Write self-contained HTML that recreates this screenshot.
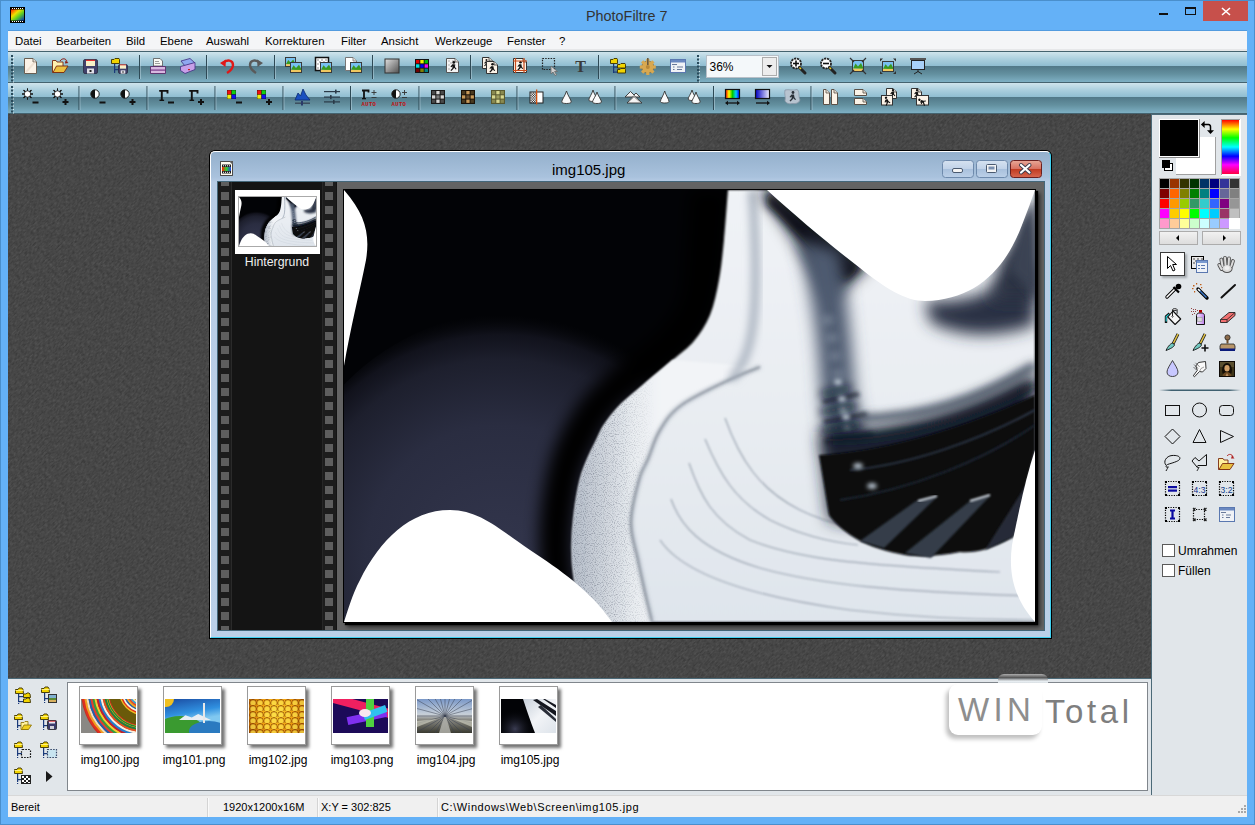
<!DOCTYPE html>
<html><head><meta charset="utf-8">
<style>
*{margin:0;padding:0;box-sizing:border-box}
html,body{width:1255px;height:825px;overflow:hidden;background:#64B1F7;font-family:"Liberation Sans",sans-serif;}
.a{position:absolute}
#frame{left:0;top:0;width:1255px;height:825px;background:#64B1F7;border:1px solid #4A8FCC;}
#title{left:586px;top:7px;font-size:14.4px;color:#333;line-height:18px}
#menubar{left:8px;top:31px;width:1239px;height:20px;background:#F4F5F7;border-bottom:2px solid #E6E7E9;box-shadow:0 -1px 0 #529BDF}
#menubar span{position:absolute;top:3px;font-size:11.4px;color:#000;line-height:14px}
.tb{left:8px;width:1239px;height:30px;background:linear-gradient(#CFE4EC 0px,#ABCFDE 7px,#8FBDD1 14px,#517888 14px,#63909F 22px,#7EB0C4 30px)}
#tbbg{left:8px;top:51px;width:1239px;height:63px;background:#45636F}
#ws{left:8px;top:114px;width:1144px;height:565px;background:#474747}
#rpanel{left:1151px;top:114px;width:96px;height:681px;background:#E1E6EA;border-left:1px solid #4C6A78;border-top:1px solid #4C6A78}
#bpanel{left:8px;top:678px;width:1144px;height:117px;background:#E1E6EA;border-top:1px solid #4C6A78;border-right:1px solid #4C6A78}
#status{left:8px;top:795px;width:1239px;height:22px;background:#F0F0F0;border-top:1px solid #D8D8D8}
#status span{position:absolute;top:4px;font-size:11px;color:#000;line-height:14px}

#win{left:210px;top:151px;width:841px;height:487px;border-radius:5px 5px 0 0;background:linear-gradient(#94B0CC,#A9C2DD 25px,#B7CCE5 30px,#BBD0E8);border-top:1px solid #fff;border-left:1px solid #fff;border-right:1px solid #3FD0F0;border-bottom:1px solid #3FD0F0;box-shadow:0 0 0 1px #000}
#wtitle{left:341px;top:9px;font-size:15px;color:#000;line-height:18px}
#client{left:6px;top:29px;width:828px;height:450px;background:#636363;border-top:1px solid #44677A;border-left:1px solid #44677A;border-right:1px solid #44677A;border-bottom:1px solid #44677A}
#film{left:0;top:0;width:119px;height:448px;background:#141414;overflow:hidden}
.fl{top:0;width:15px;height:448px;background:#1C1C1C}
.hole{position:absolute;width:8px;height:8px;background:#5E5E5E}
#pic{left:125px;top:7px;width:693px;height:434px;background:#000;border:1px solid #000;box-shadow:2px 2px 1px #000,4px 4px 4px rgba(0,0,0,.6)}
.ti{position:absolute;left:1px;top:12px;width:55px;height:34px;overflow:hidden}
</style></head><body>
<div id="frame" class="a"></div>
<div id="title" class="a">PhotoFiltre 7</div>
<div id="menubar" class="a">
<span style="left:7px">Datei</span>
<span style="left:48px">Bearbeiten</span>
<span style="left:118px">Bild</span>
<span style="left:152px">Ebene</span>
<span style="left:198px">Auswahl</span>
<span style="left:257px">Korrekturen</span>
<span style="left:333px">Filter</span>
<span style="left:373px">Ansicht</span>
<span style="left:427px">Werkzeuge</span>
<span style="left:499px">Fenster</span>
<span style="left:551px">?</span>
</div>
<div id="tbbg" class="a"></div>
<div class="a tb" style="top:52px"></div>
<div class="a tb" style="top:83px"></div>
<div id="ws" class="a"><svg width="1144" height="565" style="position:absolute;left:0;top:0"><defs><filter id="tex" x="0" y="0" width="100%" height="100%" color-interpolation-filters="sRGB"><feTurbulence type="fractalNoise" baseFrequency="0.65 0.32" numOctaves="2" seed="3" result="n"/><feColorMatrix in="n" type="matrix" values="1 0 0 0 -0.22  1 0 0 0 -0.22  1 0 0 0 -0.22  0 0 0 0 1"/></filter></defs><rect width="1144" height="565" fill="#474747"/><g transform="rotate(45 572 282)"><rect x="-400" y="-600" width="1944" height="1765" filter="url(#tex)" opacity="0.16"/></g></svg></div>
<div id="win" class="a">
<div id="wtitle" class="a">img105.jpg</div>
<div id="client" class="a">
<div id="film" class="a">
<div class="a fl" style="left:0;width:13px"><div class="hole" style="left:3px;top:-4px"></div><div class="hole" style="left:3px;top:10px"></div><div class="hole" style="left:3px;top:24px"></div><div class="hole" style="left:3px;top:38px"></div><div class="hole" style="left:3px;top:52px"></div><div class="hole" style="left:3px;top:66px"></div><div class="hole" style="left:3px;top:80px"></div><div class="hole" style="left:3px;top:94px"></div><div class="hole" style="left:3px;top:108px"></div><div class="hole" style="left:3px;top:122px"></div><div class="hole" style="left:3px;top:136px"></div><div class="hole" style="left:3px;top:150px"></div><div class="hole" style="left:3px;top:164px"></div><div class="hole" style="left:3px;top:178px"></div><div class="hole" style="left:3px;top:192px"></div><div class="hole" style="left:3px;top:206px"></div><div class="hole" style="left:3px;top:220px"></div><div class="hole" style="left:3px;top:234px"></div><div class="hole" style="left:3px;top:248px"></div><div class="hole" style="left:3px;top:262px"></div><div class="hole" style="left:3px;top:276px"></div><div class="hole" style="left:3px;top:290px"></div><div class="hole" style="left:3px;top:304px"></div><div class="hole" style="left:3px;top:318px"></div><div class="hole" style="left:3px;top:332px"></div><div class="hole" style="left:3px;top:346px"></div><div class="hole" style="left:3px;top:360px"></div><div class="hole" style="left:3px;top:374px"></div><div class="hole" style="left:3px;top:388px"></div><div class="hole" style="left:3px;top:402px"></div><div class="hole" style="left:3px;top:416px"></div><div class="hole" style="left:3px;top:430px"></div><div class="hole" style="left:3px;top:444px"></div></div>
<div class="a" style="left:13px;top:0;width:1px;height:448px;background:#2A2A2A"></div>
<div class="a fl" style="left:105px;width:13px"><div class="hole" style="left:2px;top:-4px"></div><div class="hole" style="left:2px;top:10px"></div><div class="hole" style="left:2px;top:24px"></div><div class="hole" style="left:2px;top:38px"></div><div class="hole" style="left:2px;top:52px"></div><div class="hole" style="left:2px;top:66px"></div><div class="hole" style="left:2px;top:80px"></div><div class="hole" style="left:2px;top:94px"></div><div class="hole" style="left:2px;top:108px"></div><div class="hole" style="left:2px;top:122px"></div><div class="hole" style="left:2px;top:136px"></div><div class="hole" style="left:2px;top:150px"></div><div class="hole" style="left:2px;top:164px"></div><div class="hole" style="left:2px;top:178px"></div><div class="hole" style="left:2px;top:192px"></div><div class="hole" style="left:2px;top:206px"></div><div class="hole" style="left:2px;top:220px"></div><div class="hole" style="left:2px;top:234px"></div><div class="hole" style="left:2px;top:248px"></div><div class="hole" style="left:2px;top:262px"></div><div class="hole" style="left:2px;top:276px"></div><div class="hole" style="left:2px;top:290px"></div><div class="hole" style="left:2px;top:304px"></div><div class="hole" style="left:2px;top:318px"></div><div class="hole" style="left:2px;top:332px"></div><div class="hole" style="left:2px;top:346px"></div><div class="hole" style="left:2px;top:360px"></div><div class="hole" style="left:2px;top:374px"></div><div class="hole" style="left:2px;top:388px"></div><div class="hole" style="left:2px;top:402px"></div><div class="hole" style="left:2px;top:416px"></div><div class="hole" style="left:2px;top:430px"></div><div class="hole" style="left:2px;top:444px"></div></div>
<div class="a" style="left:104px;top:0;width:1px;height:448px;background:#262626"></div>
<div class="a" style="left:17px;top:8px;width:85px;height:64px;background:#fff"></div>
<div class="a" style="left:20px;top:14px;width:79px;height:51px;background:#222;border:1px solid #aaa;overflow:hidden"><svg width="77" height="49" viewBox="344 190 691 432" preserveAspectRatio="none" style="position:absolute;left:0;top:0"><use href="#pianoContent"/></svg></div>
<div class="a" style="left:0;top:72.5px;width:118px;text-align:center;font-size:12.3px;color:#EEE;line-height:15px">Hintergrund</div>
</div>
<div id="pic" class="a" style="overflow:hidden"><!--PIANO--><svg class="a" style="left:0;top:0" width="691" height="432" viewBox="344 190 691 432">
<defs>
<filter id="b1" x="-20%" y="-20%" width="140%" height="140%"><feGaussianBlur stdDeviation="0.8"/></filter>
<filter id="b2" x="-20%" y="-20%" width="140%" height="140%"><feGaussianBlur stdDeviation="2"/></filter>
<filter id="b4" x="-30%" y="-30%" width="160%" height="160%"><feGaussianBlur stdDeviation="4"/></filter>
<filter id="b8" x="-50%" y="-50%" width="200%" height="200%"><feGaussianBlur stdDeviation="8"/></filter>
<filter id="b14" x="-50%" y="-50%" width="200%" height="200%"><feGaussianBlur stdDeviation="14"/></filter>
<radialGradient id="navy" cx="500" cy="560" r="245" gradientUnits="userSpaceOnUse">
<stop offset="0" stop-color="#33364D"/><stop offset="0.55" stop-color="#2A2D41"/><stop offset="0.82" stop-color="#1D1F2D"/><stop offset="0.92" stop-color="#141520" stop-opacity="0.85"/><stop offset="1" stop-color="#0A0B10" stop-opacity="0"/>
</radialGradient>
<linearGradient id="keysg" x1="0" y1="190" x2="0" y2="622" gradientUnits="userSpaceOnUse">
<stop offset="0" stop-color="#F0F3F6"/><stop offset="0.5" stop-color="#E9EDF2"/><stop offset="1" stop-color="#DFE5EC"/>
</linearGradient>
<linearGradient id="bandg" x1="570" y1="0" x2="660" y2="0" gradientUnits="userSpaceOnUse">
<stop offset="0" stop-color="#B4BCC8"/><stop offset="0.35" stop-color="#CDD3DB"/><stop offset="0.7" stop-color="#E8ECF0"/><stop offset="1" stop-color="#F2F4F7"/>
</linearGradient>
<filter id="speck" x="0" y="0" width="100%" height="100%" color-interpolation-filters="sRGB"><feTurbulence type="fractalNoise" baseFrequency="0.9" numOctaves="1" seed="7"/><feColorMatrix type="matrix" values="0 0 0 0 0.25  0 0 0 0 0.28  0 0 0 0 0.35  -2.2 0 0 0 1.15"/></filter>
<linearGradient id="smg" x1="565" y1="0" x2="655" y2="0" gradientUnits="userSpaceOnUse"><stop offset="0" stop-color="#fff"/><stop offset="0.6" stop-color="#fff" stop-opacity="0.8"/><stop offset="1" stop-color="#fff" stop-opacity="0"/></linearGradient><mask id="speckmask" maskUnits="userSpaceOnUse" x="344" y="190" width="691" height="432"><rect x="344" y="190" width="691" height="432" fill="url(#smg)"/></mask>
<clipPath id="bandclip"><path d="M672.7,360.0 C667.9,364.1 652.1,377.4 643.6,384.7 C635.1,392.0 627.9,397.6 621.8,403.6 C615.7,409.7 611.0,415.4 607.0,421.0 C603.0,426.6 602.5,427.2 598.0,437.0 C593.5,446.8 584.3,462.8 580.0,480.0 C575.7,497.2 572.7,522.0 572.0,540.0 C571.3,558.0 573.0,574.3 576.0,588.0 C579.0,601.7 587.7,616.3 590.0,622.0 L652,622 C650.7,616.3 646.3,598.3 644.0,588.0 C641.7,577.7 640.2,571.0 638.0,560.0 C635.8,549.0 630.8,535.3 631.0,522.0 C631.2,508.7 636.2,490.5 639.0,480.0 C641.8,469.5 644.5,467.3 648.0,459.0 C651.5,450.7 654.4,439.0 660.0,430.0 C665.6,421.0 669.7,413.5 681.5,405.0 C693.3,396.5 717.9,385.3 731.0,379.0 C744.1,372.7 755.2,369.0 760.0,367.0 Z"/></clipPath>
</defs>
<g id="pianoContent">
<rect x="344" y="190" width="691" height="432" fill="#020306"/>
<!-- navy glow -->
<circle cx="520" cy="555" r="245" fill="url(#navy)"/>
<!-- black shadow along swoosh -->
<path d="M690.0,190.0 C689.3,200.0 687.7,231.7 686.0,250.0 C684.3,268.3 685.2,285.8 680.0,300.0 C674.8,314.2 666.3,323.3 655.0,335.0 C643.7,346.7 624.8,358.3 612.0,370.0 C599.2,381.7 588.0,390.8 578.0,405.0 C568.0,419.2 558.3,435.8 552.0,455.0 C545.7,474.2 541.7,499.2 540.0,520.0 C538.3,540.8 540.0,563.0 542.0,580.0 C544.0,597.0 550.3,615.0 552.0,622.0 L590,622 C587.7,616.3 579.0,601.7 576.0,588.0 C573.0,574.3 571.3,558.0 572.0,540.0 C572.7,522.0 575.7,497.2 580.0,480.0 C584.3,462.8 593.5,446.8 598.0,437.0 C602.5,427.2 603.0,426.6 607.0,421.0 C611.0,415.4 615.7,409.7 621.8,403.6 C627.9,397.6 635.1,392.0 643.6,384.7 C652.1,377.4 664.3,367.3 672.7,360.0 C681.1,352.7 687.8,348.5 694.0,341.0 C700.2,333.5 705.8,325.2 710.0,315.0 C714.2,304.8 716.7,292.5 719.0,280.0 C721.3,267.5 722.5,255.0 724.0,240.0 C725.5,225.0 727.3,198.3 728.0,190.0 Z" fill="#020306" filter="url(#b8)"/>
<!-- main light region (keys + swoosh) -->
<path d="M728,190 C727.3,198.3 725.5,225.0 724.0,240.0 C722.5,255.0 721.3,267.5 719.0,280.0 C716.7,292.5 714.2,304.8 710.0,315.0 C705.8,325.2 700.2,333.5 694.0,341.0 C687.8,348.5 681.1,352.7 672.7,360.0 C664.3,367.3 652.1,377.4 643.6,384.7 C635.1,392.0 627.9,397.6 621.8,403.6 C615.7,409.7 611.0,415.4 607.0,421.0 C603.0,426.6 602.5,427.2 598.0,437.0 C593.5,446.8 584.3,462.8 580.0,480.0 C575.7,497.2 572.7,522.0 572.0,540.0 C571.3,558.0 573.0,574.3 576.0,588.0 C579.0,601.7 587.7,616.3 590.0,622.0 L1035,622 L1035,190 Z" fill="url(#keysg)" filter="url(#b1)"/>
<!-- textured swoosh band lower part -->
<path d="M672.7,360.0 C667.9,364.1 652.1,377.4 643.6,384.7 C635.1,392.0 627.9,397.6 621.8,403.6 C615.7,409.7 611.0,415.4 607.0,421.0 C603.0,426.6 602.5,427.2 598.0,437.0 C593.5,446.8 584.3,462.8 580.0,480.0 C575.7,497.2 572.7,522.0 572.0,540.0 C571.3,558.0 573.0,574.3 576.0,588.0 C579.0,601.7 587.7,616.3 590.0,622.0 L652,622 C650.7,616.3 646.3,598.3 644.0,588.0 C641.7,577.7 640.2,571.0 638.0,560.0 C635.8,549.0 630.8,535.3 631.0,522.0 C631.2,508.7 636.2,490.5 639.0,480.0 C641.8,469.5 644.5,467.3 648.0,459.0 C651.5,450.7 654.4,439.0 660.0,430.0 C665.6,421.0 669.7,413.5 681.5,405.0 C693.3,396.5 717.9,385.3 731.0,379.0 C744.1,372.7 755.2,369.0 760.0,367.0 Z" fill="url(#bandg)" filter="url(#b1)"/>
<g clip-path="url(#bandclip)" mask="url(#speckmask)" opacity="0.6"><rect x="560" y="350" width="230" height="272" filter="url(#speck)"/></g>
<path d="M760.0,367.0 C755.2,369.0 744.1,372.7 731.0,379.0 C717.9,385.3 693.3,396.5 681.5,405.0 C669.7,413.5 665.6,421.0 660.0,430.0 C654.4,439.0 651.5,450.7 648.0,459.0 C644.5,467.3 641.8,469.5 639.0,480.0 C636.2,490.5 631.2,508.7 631.0,522.0 C630.8,535.3 635.8,549.0 638.0,560.0 C640.2,571.0 641.7,577.7 644.0,588.0 C646.3,598.3 650.7,616.3 652.0,622.0" fill="none" stroke="#8A94A2" stroke-width="2.5" filter="url(#b2)"/>
<path d="M760.0,367.0 C755.2,369.0 744.1,372.7 731.0,379.0 C717.9,385.3 693.3,396.5 681.5,405.0 C669.7,413.5 665.6,421.0 660.0,430.0 C654.4,439.0 651.5,450.7 648.0,459.0 C644.5,467.3 641.8,469.5 639.0,480.0 C636.2,490.5 631.2,508.7 631.0,522.0 C630.8,535.3 635.8,549.0 638.0,560.0 C640.2,571.0 641.7,577.7 644.0,588.0 C646.3,598.3 650.7,616.3 652.0,622.0" fill="none" stroke="#4A5260" stroke-width="1" filter="url(#b1)" opacity="0.7"/>
<!-- white key arcs -->
<g fill="none" stroke="#8E98A6" stroke-width="1.2" opacity="0.85" filter="url(#b1)">
<path d="M725,418 C740,460 760,490 800,510 C830,525 870,532 900,534"/>
<path d="M705,439 C720,475 735,500 770,520 C800,535 830,542 858,545"/>
<path d="M689,463 C700,495 712,520 750,540 C800,560 860,565 1000,572"/>
<path d="M671,499 C680,525 700,550 760,568 C820,585 900,592 1035,596"/>
<path d="M660,540 C680,570 740,595 850,610 C920,618 980,620 1035,620"/>
</g>
<!-- top swoosh inner gray line -->
<path d="M752,190 C756,240 757,300 752,330 C749,350 742,368 731,379" fill="none" stroke="#A0AAB8" stroke-width="7" filter="url(#b4)"/>
<!-- dark navy along top-right cutout boundary -->
<path d="M760,190 L800,190 C830,215 850,245 870,262 C850,285 835,290 830,300 C815,270 795,235 760,190 Z" fill="#0C1220" filter="url(#b8)"/>
<path d="M767,190 C800,220 830,245 860,268 L845,282 C815,255 790,225 767,205 Z" fill="#080C18" filter="url(#b4)"/>
<!-- blurred gray vertical band (blurred black keys) -->
<path d="M798,240 C812,290 818,340 820,380 C822,420 826,445 836,465 L880,465 C866,440 856,410 854,380 C851,335 846,290 840,250 Z" fill="#4E5A70" filter="url(#b8)"/>
<g fill="#A8B4C2" filter="url(#b4)" opacity="0.8">
<ellipse cx="828" cy="320" rx="5" ry="3"/><ellipse cx="832" cy="338" rx="5" ry="3"/><ellipse cx="835" cy="356" rx="5" ry="3"/><ellipse cx="838" cy="374" rx="5" ry="3"/><ellipse cx="840" cy="392" rx="5" ry="3"/><ellipse cx="844" cy="410" rx="5" ry="3"/>
</g>
<g fill="#1A2232" filter="url(#b2)" opacity="0.85">
<path d="M822,400 L858,392 L860,396 L824,404Z"/><path d="M823,420 L866,412 L868,416 L825,424Z"/><path d="M824,440 L872,432 L874,436 L826,444Z"/>
</g>
<g fill="#C8D2DE" filter="url(#b2)" opacity="0.9">
<ellipse cx="843" cy="410" rx="4" ry="3"/><ellipse cx="847" cy="428" rx="4" ry="3"/><ellipse cx="850" cy="446" rx="4" ry="3"/>
</g>
<!-- dark band near top right cutout -->
<path d="M925,300 C965,305 1005,290 1035,258 L1035,325 C1000,338 960,338 930,322 Z" fill="#2A3344" filter="url(#b8)"/><path d="M1000,260 C1020,240 1030,215 1035,195 L1035,300 L990,300 Z" fill="#2A3343" filter="url(#b8)"/>
<path d="M1020,225 C1028,210 1035,200 1035,190 L1035,300 C1030,290 1020,280 1010,270 Z" fill="#3A4252" filter="url(#b4)"/>
<!-- keys dark zone blurred -->
<path d="M819,432 C880,432 960,415 1035,370 L1035,470 C980,515 900,535 829,520 Z" fill="#1A2232" filter="url(#b8)"/>
<g fill="none" filter="url(#b4)">
<path d="M860,418 C920,418 980,400 1035,365" stroke="#3A4658" stroke-width="7"/>
<path d="M830,440 C900,440 970,420 1035,385" stroke="#0E1420" stroke-width="6"/>
</g>
<!-- sharp black keys region -->
<path d="M819,455 C880,452 960,430 1035,395 L1035,450 L1013,537 C990,550 975,553 960,552 C940,556 915,558 900,554 C880,550 865,545 850,535 C840,528 832,520 829,515 Z" fill="#07080D" filter="url(#b1)"/>
<path d="M850,470 C910,465 980,440 1035,410" fill="none" stroke="#2A3444" stroke-width="2" filter="url(#b1)"/>
<path d="M840,500 C910,490 985,460 1035,425" fill="none" stroke="#1E2634" stroke-width="2" filter="url(#b1)"/>
<!-- blurred key tips on left -->
<g fill="#0E1420" filter="url(#b4)" opacity="0.9">
<path d="M820,392 L850,386 L852,390 L822,397Z"/><path d="M820,410 L855,403 L857,408 L822,415Z"/><path d="M821,428 L860,421 L862,426 L823,433Z"/>
</g>
<g fill="#B8C4D0" filter="url(#b2)">
<ellipse cx="838" cy="382" rx="4" ry="3"/><ellipse cx="842" cy="399" rx="4" ry="3"/><ellipse cx="846" cy="417" rx="4" ry="3"/><ellipse cx="858" cy="466" rx="5" ry="3"/><ellipse cx="872" cy="486" rx="5" ry="3"/>
</g>
<!-- black keys tops -->
<path d="M860,541 L916,501 L937,497 L884,548 Z" fill="#343C4A" filter="url(#b1)"/>
<path d="M905,553 L970,501 L990,496 L931,558 Z" fill="#343C4A" filter="url(#b1)"/>
<path d="M985,550 L1028,482 L1035,472 L1035,495 L1013,537 Z" fill="#262C38" filter="url(#b1)"/>
<path d="M918,501 L937,496" stroke="#D8E0EA" stroke-width="2.2" filter="url(#b1)"/>
<path d="M970,501 L990,495" stroke="#D8E0EA" stroke-width="2.2" filter="url(#b1)"/>
<!-- white cutouts -->
<g fill="#FFFFFF">
<path d="M344,190 L344,366 C350,330 360,290 366,260 C370,235 366,215 344,190 Z"/>
<path d="M344,622 L612,622 C590,590 560,570 530,550 C500,530 480,510 450,510 C410,510 380,540 360,580 C352,595 348,610 344,622 Z"/>
<path d="M767,190 C800,220 830,245 860,268 C885,288 905,301 925,301 C975,300 1005,270 1022,225 C1028,210 1032,198 1035,190 Z"/>
<path d="M1035,450 C1025,480 1018,515 1012,545 C1008,575 1015,600 1035,622 Z"/>
</g>
</g>
</svg><!--/PIANO--></div>
</div>
</div>
<div id="rpanel" class="a"></div>

<div id="bpanel" class="a"></div>
<div id="status" class="a">
<span style="left:3px">Bereit</span>
<div class="a" style="left:199px;top:2px;width:1px;height:19px;background:#D4D4D4"></div><div class="a" style="left:200px;top:2px;width:1px;height:19px;background:#FAFAFA"></div>
<div class="a" style="left:309px;top:2px;width:1px;height:19px;background:#D4D4D4"></div><div class="a" style="left:310px;top:2px;width:1px;height:19px;background:#FAFAFA"></div>
<div class="a" style="left:429px;top:2px;width:1px;height:19px;background:#D4D4D4"></div><div class="a" style="left:430px;top:2px;width:1px;height:19px;background:#FAFAFA"></div>
<svg class="a" style="left:1228px;top:9px" width="11" height="11" viewBox="0 0 11 11"><g fill="#A8A8A8"><rect x="8" y="0" width="2" height="2"/><rect x="5" y="3" width="2" height="2"/><rect x="8" y="3" width="2" height="2"/><rect x="2" y="6" width="2" height="2"/><rect x="5" y="6" width="2" height="2"/><rect x="8" y="6" width="2" height="2"/></g></svg>
<span style="left:215px">1920x1200x16M</span>
<span style="left:313px">X:Y = 302:825</span>
<span style="left:433px;letter-spacing:0.6px">C:\Windows\Web\Screen\img105.jpg</span>
</div>
<!--RPANEL--><svg class="a" style="left:1152px;top:114px" width="95" height="681" viewBox="1152 114 95 681" shape-rendering="geometricPrecision">
<defs>
<linearGradient id="rainbow" x1="0" y1="0" x2="0" y2="1">
<stop offset="0" stop-color="#FF0000"/><stop offset="0.17" stop-color="#FFFF00"/><stop offset="0.33" stop-color="#00FF00"/><stop offset="0.5" stop-color="#00FFFF"/><stop offset="0.67" stop-color="#0000FF"/><stop offset="0.83" stop-color="#FF00FF"/><stop offset="1" stop-color="#FF0040"/>
</linearGradient>
<linearGradient id="navbtn" x1="0" y1="0" x2="0" y2="1"><stop offset="0" stop-color="#F2F2F2"/><stop offset="1" stop-color="#DCDCDC"/></linearGradient>
<linearGradient id="sep" x1="0" y1="0" x2="1" y2="0"><stop offset="0" stop-color="#3F6070" stop-opacity="0"/><stop offset="0.15" stop-color="#3F6070"/><stop offset="0.85" stop-color="#3F6070"/><stop offset="1" stop-color="#3F6070" stop-opacity="0"/></linearGradient>
<filter id="sh1" x="-20%" y="-20%" width="140%" height="140%"><feGaussianBlur stdDeviation="0.8"/></filter><pattern id="dots" width="2" height="2" patternUnits="userSpaceOnUse"><rect width="1" height="1" fill="#000"/></pattern>
</defs>
<!-- colors: bg swatch -->
<rect x="1176" y="137" width="40" height="38" fill="#A0A0A0"/>
<rect x="1176" y="137" width="39" height="37" fill="#FFFFFF"/>
<!-- fg swatch -->
<rect x="1159" y="119" width="41" height="39" fill="#8A8A8A"/>
<rect x="1159" y="119" width="40" height="38" fill="#FFFFFF"/>
<rect x="1160" y="120" width="38" height="36" fill="#000000"/>
<!-- swap arrows -->
<path d="M1204,124.4 L1208.5,124.4 Q1210.5,124.6 1210.5,126.8 L1210.5,131" fill="none" stroke="#000" stroke-width="1.5"/>
<path d="M1200.9,124.4 L1204.6,120.9 L1204.6,127.9 Z" fill="#000"/>
<path d="M1207,130.2 L1214,130.2 L1210.5,133.9 Z" fill="#000"/>
<!-- reset icon -->
<rect x="1164.5" y="163.5" width="8" height="7" fill="#fff" stroke="#000" stroke-width="1"/>
<rect x="1162" y="160" width="8" height="8" fill="#000"/>
<!-- rainbow -->
<rect x="1221" y="119" width="20" height="57" fill="#FFFFFF"/>
<rect x="1221" y="119" width="1" height="56" fill="#A0A0A0"/>
<rect x="1221" y="119" width="19" height="1" fill="#A0A0A0"/>
<rect x="1222" y="120" width="17" height="54" fill="url(#rainbow)"/>
<!-- palette -->
<rect x="1159" y="178" width="81" height="51" fill="#A6A6A6"/>
<g>
<rect x="1160" y="179" width="9" height="9" fill="#000000"/>
<rect x="1170" y="179" width="9" height="9" fill="#993300"/>
<rect x="1180" y="179" width="9" height="9" fill="#333300"/>
<rect x="1190" y="179" width="9" height="9" fill="#003300"/>
<rect x="1200" y="179" width="9" height="9" fill="#003366"/>
<rect x="1210" y="179" width="9" height="9" fill="#000080"/>
<rect x="1220" y="179" width="9" height="9" fill="#333399"/>
<rect x="1230" y="179" width="9" height="9" fill="#333333"/>
<rect x="1160" y="189" width="9" height="9" fill="#800000"/>
<rect x="1170" y="189" width="9" height="9" fill="#FF6600"/>
<rect x="1180" y="189" width="9" height="9" fill="#808000"/>
<rect x="1190" y="189" width="9" height="9" fill="#008000"/>
<rect x="1200" y="189" width="9" height="9" fill="#008080"/>
<rect x="1210" y="189" width="9" height="9" fill="#0000FF"/>
<rect x="1220" y="189" width="9" height="9" fill="#666699"/>
<rect x="1230" y="189" width="9" height="9" fill="#808080"/>
<rect x="1160" y="199" width="9" height="9" fill="#FF0000"/>
<rect x="1170" y="199" width="9" height="9" fill="#FF9900"/>
<rect x="1180" y="199" width="9" height="9" fill="#99CC00"/>
<rect x="1190" y="199" width="9" height="9" fill="#339966"/>
<rect x="1200" y="199" width="9" height="9" fill="#33CCCC"/>
<rect x="1210" y="199" width="9" height="9" fill="#3366FF"/>
<rect x="1220" y="199" width="9" height="9" fill="#800080"/>
<rect x="1230" y="199" width="9" height="9" fill="#969696"/>
<rect x="1160" y="209" width="9" height="9" fill="#FF00FF"/>
<rect x="1170" y="209" width="9" height="9" fill="#FFCC00"/>
<rect x="1180" y="209" width="9" height="9" fill="#FFFF00"/>
<rect x="1190" y="209" width="9" height="9" fill="#00FF00"/>
<rect x="1200" y="209" width="9" height="9" fill="#00FFFF"/>
<rect x="1210" y="209" width="9" height="9" fill="#00CCFF"/>
<rect x="1220" y="209" width="9" height="9" fill="#993366"/>
<rect x="1230" y="209" width="9" height="9" fill="#C0C0C0"/>
<rect x="1160" y="219" width="9" height="9" fill="#FF99CC"/>
<rect x="1170" y="219" width="9" height="9" fill="#FFCC99"/>
<rect x="1180" y="219" width="9" height="9" fill="#FFFF99"/>
<rect x="1190" y="219" width="9" height="9" fill="#CCFFCC"/>
<rect x="1200" y="219" width="9" height="9" fill="#CCFFFF"/>
<rect x="1210" y="219" width="9" height="9" fill="#99CCFF"/>
<rect x="1220" y="219" width="9" height="9" fill="#CC99FF"/>
<rect x="1229" y="218" width="11" height="11" fill="#FFFFFF"/>
</g>
<!-- nav buttons -->
<rect x="1159.5" y="231.5" width="38" height="13" fill="url(#navbtn)" stroke="#ACACAC"/>
<rect x="1202.5" y="231.5" width="38" height="13" fill="url(#navbtn)" stroke="#ACACAC"/>
<path d="M1176,238 L1179,235 L1179,241 Z" fill="#000"/>
<path d="M1223,235 L1226,238 L1223,241 Z" fill="#000"/>
<!-- selected tool -->
<rect x="1162" y="254" width="25" height="24" fill="#5A5F65" opacity="0.45" filter="url(#sh1)"/>
<rect x="1160.5" y="252.5" width="24" height="23" fill="#FFFFFF" stroke="#3A3A3A"/>
<path d="M1167.5,256.5 L1167.5,268.5 L1170.5,265.5 L1173,271 L1175,270 L1172.7,264.5 L1176.5,264.5 Z" fill="#fff" stroke="#000" stroke-width="1" stroke-linejoin="round"/>
<!-- layer manager -->
<rect x="1191.5" y="256.5" width="12" height="12" fill="#E8E8E8" stroke="#000"/>
<g fill="#999"><rect x="1193" y="258" width="2" height="2"/><rect x="1197" y="258" width="2" height="2"/><rect x="1201" y="258" width="2" height="2"/><rect x="1195" y="260" width="2" height="2"/><rect x="1199" y="260" width="2" height="2"/><rect x="1193" y="262" width="2" height="2"/></g>
<rect x="1196.5" y="260.5" width="11" height="12" fill="#EEF2F8" stroke="#5A78B0"/>
<rect x="1197" y="261" width="10" height="2" fill="#7A9AD0"/>
<g fill="#5A78B0"><rect x="1198" y="265" width="2" height="1"/><rect x="1201" y="265" width="4" height="1"/><rect x="1198" y="268" width="2" height="1"/><rect x="1201" y="268" width="4" height="1"/></g>
<!-- hand -->
<g stroke-linecap="round"><path d="M1222.5,266 L1221.3,259.5" stroke="#505050" stroke-width="3.8"/><path d="M1225.5,265 L1225,257.8" stroke="#505050" stroke-width="3.8"/><path d="M1228.6,265 L1229,258.3" stroke="#505050" stroke-width="3.8"/><path d="M1231.4,266 L1233,261" stroke="#505050" stroke-width="3.8"/><path d="M1221.5,269 L1219.3,265" stroke="#505050" stroke-width="3.8"/><ellipse cx="1227" cy="268.5" rx="5.6" ry="4.6" fill="#505050"/><path d="M1222.5,266 L1221.3,259.5" stroke="#DCDCDC" stroke-width="2"/><path d="M1225.5,265 L1225,257.8" stroke="#DCDCDC" stroke-width="2"/><path d="M1228.6,265 L1229,258.3" stroke="#DCDCDC" stroke-width="2"/><path d="M1231.4,266 L1233,261" stroke="#DCDCDC" stroke-width="2"/><path d="M1221.5,269 L1219.3,265" stroke="#DCDCDC" stroke-width="2"/><ellipse cx="1227" cy="268.5" rx="4.6" ry="3.6" fill="#DCDCDC"/><ellipse cx="1227" cy="268" rx="2.5" ry="2" fill="#F0F0F0"/></g>
<!-- eyedropper -->
<path d="M1167,297 L1175,289" stroke="#000" stroke-width="3.4" stroke-linecap="round"/>
<path d="M1167,297 L1175,289" stroke="#fff" stroke-width="1.6" stroke-linecap="round"/>
<path d="M1173.5,287 L1179,292.5" stroke="#000" stroke-width="2.2"/>
<circle cx="1178.5" cy="286.5" r="2.8" fill="#000"/>
<!-- magic wand -->
<path d="M1198,289 L1207,298" stroke="#000" stroke-width="3.4" stroke-linecap="round"/>
<path d="M1199,290 L1206.5,297.5" stroke="#3C78C8" stroke-width="1.4"/>
<path d="M1198,289 L1200,291" stroke="#fff" stroke-width="1.6"/>
<g fill="#C0601A"><rect x="1193" y="285" width="1.5" height="1.5"/><rect x="1196" y="283" width="1.2" height="1.5"/><rect x="1200" y="284" width="1.5" height="1.2"/><rect x="1192" y="288" width="1.5" height="1.2"/><rect x="1194" y="291" width="1.2" height="1.5"/><rect x="1201" y="287" width="1.2" height="1.2"/></g>
<!-- line -->
<path d="M1221.5,297.5 L1235,285" stroke="#111" stroke-width="2" stroke-linecap="round"/>
<!-- bucket -->
<path d="M1166,323 L1166,316.5 L1169.5,313.5" fill="none" stroke="#111" stroke-width="2.4" stroke-linejoin="round"/>
<path d="M1166.2,321.5 L1166.2,316.8 L1169,314.3" fill="none" stroke="#20D8E0" stroke-width="1.1"/>
<path d="M1173,311 L1180.7,319 L1175.1,324.5 L1167.8,317 Z" fill="#F6F6F6" stroke="#111" stroke-width="1.1" stroke-linejoin="round"/>
<ellipse cx="1174.8" cy="309.6" rx="2.3" ry="0.9" fill="#fff" stroke="#111" stroke-width="0.9"/>
<path d="M1172.5,310 L1172.5,316.3 M1177.1,310 L1177.1,313.8" stroke="#111" stroke-width="0.9"/>
<path d="M1172.5,315.5 L1173.3,316.5 L1172.5,317.5 L1171.7,316.5 Z" fill="none" stroke="#111" stroke-width="0.6"/>
<!-- spray -->
<defs><linearGradient id="spg" x1="0" y1="0" x2="1" y2="0"><stop offset="0" stop-color="#F0E4FF"/><stop offset="0.6" stop-color="#D8B0F8"/><stop offset="1" stop-color="#B878E8"/></linearGradient></defs>
<path d="M1196.5,324.5 L1196.5,315.5 C1196.5,314 1198,313 1199,313 L1202,313 C1203,313 1204.5,314 1204.5,315.5 L1204.5,324.5 Z" fill="url(#spg)" stroke="#111" stroke-width="1"/>
<rect x="1197.5" y="317.2" width="4.6" height="4.3" fill="#D8D8D8" stroke="#8A8A8A" stroke-width="0.5"/>
<rect x="1199" y="310" width="3" height="2.6" fill="#B00000"/>
<g fill="#7A1010"><circle cx="1191.5" cy="308.5" r="0.5"/><circle cx="1193.5" cy="309.5" r="0.5"/><circle cx="1195.5" cy="309.5" r="0.5"/><circle cx="1197.5" cy="310.5" r="0.5"/><circle cx="1191.5" cy="311.5" r="0.5"/><circle cx="1193.5" cy="311.5" r="0.5"/><circle cx="1195.5" cy="311.5" r="0.5"/><circle cx="1194.5" cy="313.5" r="0.5"/><circle cx="1192.5" cy="314.5" r="0.5"/></g>
<!-- eraser -->
<path d="M1220.5,319.5 L1229,312.5 L1235,312.5 L1235,315.5 L1227,322.5 L1220.5,322.5 Z" fill="#F07070" stroke="#222" stroke-width="0.9"/>
<path d="M1220.5,319.5 L1227,319.5 L1235,312.5 M1227,319.5 L1227,322.5" fill="none" stroke="#222" stroke-width="0.8"/>
<!-- brush -->
<path d="M1178,334 L1173,344" stroke="#222" stroke-width="3"/>
<path d="M1178,334 L1173,344" stroke="#E0C040" stroke-width="1.6"/>
<path d="M1173,343 C1171,343 1168,346 1166,350.5 C1170,349 1174,347 1174.5,345 Z" fill="#70C8C0" stroke="#111" stroke-width="0.9"/>
<path d="M1205,334 L1200,344" stroke="#222" stroke-width="3"/>
<path d="M1205,334 L1200,344" stroke="#E0C040" stroke-width="1.6"/>
<path d="M1200,343 C1198,343 1195,346 1193,350.5 C1197,349 1201,347 1201.5,345 Z" fill="#70C8C0" stroke="#111" stroke-width="0.9"/>
<path d="M1205,344.5 L1205,351.5 M1201.5,348 L1208.5,348" stroke="#111" stroke-width="1.6"/>
<!-- stamp -->
<circle cx="1227.5" cy="337.5" r="2.6" fill="#8A6A4A" stroke="#222" stroke-width="0.8"/>
<rect x="1226.5" y="339.5" width="2" height="4" fill="#6A4A2A"/>
<path d="M1221,344 L1234,344 L1235,346 L1235,349.5 L1220,349.5 L1220,346 Z" fill="#B8966A" stroke="#222" stroke-width="0.8"/>
<rect x="1220" y="348.5" width="15" height="2.5" fill="#0A1A7A"/>
<!-- drop -->
<path d="M1172.5,360.5 C1170,365 1167,369 1167,372 C1167,375 1169.5,376.5 1172.5,376.5 C1175.5,376.5 1178,375 1178,372 C1178,369 1175,365 1172.5,360.5 Z" fill="#C8C8FF" stroke="#333" stroke-width="0.9"/>
<!-- smudge finger -->
<path d="M1198.5,362.5 L1205.5,361.5 L1206,368.5 L1202.5,372 L1199.5,371.5 L1194.5,376.8 L1193.3,375.8 L1197.3,370.3 L1195.8,366 Z" fill="#FAFAFA" stroke="#222" stroke-width="0.9" stroke-linejoin="round"/>
<path d="M1194,364.5 L1198,368.5 M1195.5,362.8 L1199.5,366.8 M1193.5,367 L1196.5,370" stroke="#444" stroke-width="0.7"/>
<path d="M1199.5,371.5 L1201,368.5 L1204,367" fill="none" stroke="#666" stroke-width="0.6"/>
<!-- mona -->
<rect x="1219" y="361" width="16" height="16" fill="#0E0A06"/>
<rect x="1220" y="362" width="14" height="14" fill="#3E3418"/>
<rect x="1220" y="362" width="14" height="5" fill="#5A5030"/>
<ellipse cx="1227" cy="370" rx="5" ry="7" fill="#140E06"/>
<ellipse cx="1227" cy="368.2" rx="2.6" ry="3.3" fill="#D0A068"/>
<path d="M1222.5,376 C1223,373 1225,372 1227,372 C1229,372 1231,373 1231.5,376 Z" fill="#6A4820"/>
<path d="M1225.5,376 L1227,373 L1228.5,376 Z" fill="#C09060"/>
<!-- separator -->
<rect x="1159" y="389.5" width="82" height="1.5" fill="url(#sep)"/>
<!-- shapes -->
<g fill="none" stroke="#111" stroke-width="1">
<rect x="1165.5" y="405.5" width="14" height="10"/>
<circle cx="1199.5" cy="410" r="7"/>
<rect x="1219.5" y="405.5" width="14" height="10" rx="3"/>
<path d="M1172.5,429 L1180,436.5 L1172.5,444 L1165,436.5 Z"/>
<path d="M1199.5,429.5 L1206,442.5 L1193,442.5 Z"/>
<path d="M1220.5,430.5 L1233.5,436.5 L1220.5,442.5 Z"/>
<path d="M1166,465 C1163,462 1166,456 1172,455.5 C1178,455 1181,457 1179.5,459.5 C1178,461.5 1172,463 1167.5,464.5"/>
<path d="M1167.5,464.5 C1165,466 1166,468 1168,467 C1169,466 1167,469 1166,471"/>
<path d="M1197,467 L1192,461 L1195,457.5 L1199,461 L1206.5,454.5 L1206.5,465.5 L1198,465.5"/>
<path d="M1198,465.5 C1196,467 1197,468 1199,467.5 C1199.5,467 1198,469 1197,471"/>
</g>
<!-- open folder -->
<path d="M1218.5,458.5 L1223,458.5 L1224,460 L1228,460 L1228,469.5 L1218.5,469.5 Z" fill="#FFF0A0" stroke="#7A2A10" stroke-width="0.9"/>
<path d="M1219,469.5 L1222.5,463.5 L1234,463.5 L1230,469.5 Z" fill="#E8C040" stroke="#7A2A10" stroke-width="0.9"/>
<path d="M1227,456 C1229,453.5 1232,454 1233,457" fill="none" stroke="#B02020" stroke-width="1"/>
<path d="M1232,455.5 L1234.5,458.5 L1231,458.5Z" fill="#B02020"/>
<!-- dotted boxes -->
<g fill="none" stroke="#000" stroke-width="1.2" stroke-dasharray="1.2,1.3">
<rect x="1165.5" y="481.5" width="14" height="14"/>
<rect x="1192.5" y="481.5" width="14" height="14"/>
<rect x="1219.5" y="481.5" width="14" height="14"/>
<rect x="1165.5" y="507.5" width="14" height="14"/>
<rect x="1193.5" y="509.5" width="11" height="10"/>
</g>
<g fill="#000"><rect x="1165" y="481" width="2" height="2"/><rect x="1178" y="481" width="2" height="2"/><rect x="1165" y="494" width="2" height="2"/><rect x="1178" y="494" width="2" height="2"/>
<rect x="1192" y="481" width="2" height="2"/><rect x="1205" y="481" width="2" height="2"/><rect x="1192" y="494" width="2" height="2"/><rect x="1205" y="494" width="2" height="2"/>
<rect x="1219" y="481" width="2" height="2"/><rect x="1232" y="481" width="2" height="2"/><rect x="1219" y="494" width="2" height="2"/><rect x="1232" y="494" width="2" height="2"/>
<rect x="1165" y="507" width="2" height="2"/><rect x="1178" y="507" width="2" height="2"/><rect x="1165" y="520" width="2" height="2"/><rect x="1178" y="520" width="2" height="2"/></g>
<rect x="1168" y="486" width="9" height="2.2" fill="#0A0AA0"/><rect x="1168" y="489.5" width="9" height="2.2" fill="#0A0AA0"/>
<text x="1199.5" y="492.5" font-family="Liberation Sans" font-size="8.5" fill="#10308A" text-anchor="middle">4:3</text>
<text x="1226.5" y="492.5" font-family="Liberation Sans" font-size="8.5" fill="#10408A" text-anchor="middle">3:2</text>
<path d="M1170,510.5 L1175,510.5 M1172.5,510.5 L1172.5,518.5 M1170,518.5 L1175,518.5" stroke="#0A0AA0" stroke-width="2.2"/>
<g fill="#222"><path d="M1193,508 L1195.5,510.5 M1193,510.5 L1195.5,508" stroke="#222" stroke-width="1.2"/><path d="M1204,508 L1206.5,510.5 M1204,510.5 L1206.5,508" stroke="#222" stroke-width="1.2"/><path d="M1193,518.5 L1195.5,521 M1193,521 L1195.5,518.5" stroke="#222" stroke-width="1.2"/><path d="M1204,518.5 L1206.5,521 M1204,521 L1206.5,518.5" stroke="#222" stroke-width="1.2"/></g>
<!-- window icon -->
<rect x="1219.5" y="507.5" width="15" height="14" fill="#F0F2F6" stroke="#5A78B0"/>
<rect x="1220" y="508" width="14" height="2.5" fill="#6A88C0"/>
<g fill="#6A7A9A"><rect x="1221" y="512" width="5" height="1"/><rect x="1222" y="514.5" width="1.5" height="1"/><rect x="1226" y="514.5" width="5" height="1"/><rect x="1222" y="517" width="1.5" height="1"/><rect x="1226" y="517" width="4" height="1"/></g>
<!-- checkboxes -->
<rect x="1162.5" y="544.5" width="12" height="12" fill="#fff" stroke="#5A5A5A"/>
<rect x="1162.5" y="564.5" width="12" height="12" fill="#fff" stroke="#5A5A5A"/>
<text x="1178" y="555" font-family="Liberation Sans" font-size="12" fill="#000">Umrahmen</text>
<text x="1178" y="575" font-family="Liberation Sans" font-size="12" fill="#000">Füllen</text>
</svg><!--/RPANEL-->
<!--BPANEL--><svg class="a" style="left:8px;top:679px" width="60" height="115" viewBox="8 679 60 115"><g transform="translate(15,687)"><path d="M0.5,2.5 L3,2.5 L4,1 L7,1 L8,2.5 L8.5,6.5 L0.5,6.5 Z" fill="#F2D400" stroke="#3A3000" stroke-width="0.9"/><rect x="0.5" y="3" width="8" height="1" fill="#FFF080"/><rect x="3" y="7" width="1.2" height="8" fill="#1A3A7A"/><rect x="3" y="16" width="1.2" height="1" fill="#1A3A7A"/><rect x="3" y="9" width="6" height="1.2" fill="#1A3A7A"/><rect x="3" y="14" width="6" height="1.2" fill="#1A3A7A"/><path d="M8.5,7 L11,7 L12,6 L14,6 L15,7 L15.5,10.5 L8.5,10.5 Z" fill="#F2D400" stroke="#3A3000" stroke-width="0.9"/><path d="M8.5,12 L11,12 L12,11 L14,11 L15,12 L15.5,15.5 L8.5,15.5 Z" fill="#F2D400" stroke="#3A3000" stroke-width="0.9"/></g><g transform="translate(41,686)"><path d="M0.5,2.5 L3,2.5 L4,1 L7,1 L8,2.5 L8.5,6.5 L0.5,6.5 Z" fill="#F2D400" stroke="#3A3000" stroke-width="0.9"/><rect x="0.5" y="3" width="8" height="1" fill="#FFF080"/><rect x="3" y="7" width="1.2" height="8" fill="#1A3A7A"/><rect x="3" y="16" width="1.2" height="1" fill="#1A3A7A"/><rect x="3" y="12" width="5" height="1.2" fill="#1A3A7A"/><rect x="7.5" y="8.5" width="8" height="8" fill="#5A8A30" stroke="#333" stroke-width="1"/><rect x="8" y="9" width="7" height="3" fill="#80B0D0"/><rect x="8" y="14" width="7" height="2" fill="#D8B060"/></g><g transform="translate(14,713)"><path d="M0.5,2.5 L3,2.5 L4,1 L7,1 L8,2.5 L8.5,6.5 L0.5,6.5 Z" fill="#F2D400" stroke="#3A3000" stroke-width="0.9"/><rect x="0.5" y="3" width="8" height="1" fill="#FFF080"/><rect x="3" y="7" width="1.2" height="8" fill="#1A3A7A"/><rect x="3" y="16" width="1.2" height="1" fill="#1A3A7A"/><rect x="3" y="12" width="5" height="1.2" fill="#1A3A7A"/><path d="M7,9.5 L10,9.5 L11,8.5 L14,8.5 L14,16.5 L7,16.5Z" fill="#FFF2A0" stroke="#8A7000" stroke-width="0.8"/><path d="M7.5,16.5 L10,12 L17.5,12 L14.5,16.5 Z" fill="#F0D020" stroke="#8A7000" stroke-width="0.8"/></g><g transform="translate(40,713)"><path d="M0.5,2.5 L3,2.5 L4,1 L7,1 L8,2.5 L8.5,6.5 L0.5,6.5 Z" fill="#F2D400" stroke="#3A3000" stroke-width="0.9"/><rect x="0.5" y="3" width="8" height="1" fill="#FFF080"/><rect x="3" y="7" width="1.2" height="8" fill="#1A3A7A"/><rect x="3" y="16" width="1.2" height="1" fill="#1A3A7A"/><rect x="3" y="12" width="5" height="1.2" fill="#1A3A7A"/><rect x="7.5" y="7.5" width="9" height="9" rx="1" fill="#3A3A6A" stroke="#222" stroke-width="0.8"/><rect x="9" y="8" width="6" height="2.5" fill="#E8E8F0"/><rect x="8.5" y="7.8" width="7" height="0.8" fill="#E02020"/><rect x="10" y="13" width="4" height="3" fill="#D0D0D8"/></g><g transform="translate(14,741)"><path d="M0.5,2.5 L3,2.5 L4,1 L7,1 L8,2.5 L8.5,6.5 L0.5,6.5 Z" fill="#F2D400" stroke="#3A3000" stroke-width="0.9"/><rect x="0.5" y="3" width="8" height="1" fill="#FFF080"/><rect x="3" y="7" width="1.2" height="8" fill="#1A3A7A"/><rect x="3" y="16" width="1.2" height="1" fill="#1A3A7A"/><rect x="3" y="12" width="5" height="1.2" fill="#1A3A7A"/><rect x="7.5" y="8.5" width="9" height="8" rx="1" fill="none" stroke="#111" stroke-width="1.2" stroke-dasharray="1.6,1.2"/></g><g transform="translate(40,741)"><path d="M0.5,2.5 L3,2.5 L4,1 L7,1 L8,2.5 L8.5,6.5 L0.5,6.5 Z" fill="#F2D400" stroke="#3A3000" stroke-width="0.9"/><rect x="0.5" y="3" width="8" height="1" fill="#FFF080"/><rect x="3" y="7" width="1.2" height="8" fill="#1A3A7A"/><rect x="3" y="16" width="1.2" height="1" fill="#1A3A7A"/><rect x="3" y="12" width="5" height="1.2" fill="#1A3A7A"/><rect x="7.5" y="8.5" width="9" height="8" fill="#C8E4F0" stroke="#3A4A6A" stroke-width="1.2" stroke-dasharray="1.6,1.2"/></g><g transform="translate(14,767)"><path d="M0.5,2.5 L3,2.5 L4,1 L7,1 L8,2.5 L8.5,6.5 L0.5,6.5 Z" fill="#F2D400" stroke="#3A3000" stroke-width="0.9"/><rect x="0.5" y="3" width="8" height="1" fill="#FFF080"/><rect x="3" y="7" width="1.2" height="8" fill="#1A3A7A"/><rect x="3" y="16" width="1.2" height="1" fill="#1A3A7A"/><rect x="3" y="12" width="5" height="1.2" fill="#1A3A7A"/><rect x="7" y="8" width="10" height="9" fill="#222"/><g fill="#fff"><rect x="8" y="9" width="2" height="2"/><rect x="12" y="9" width="2" height="2"/><rect x="10" y="11" width="2" height="2"/><rect x="14" y="11" width="2" height="2"/><rect x="8" y="13" width="2" height="2"/><rect x="12" y="13" width="2" height="2"/><rect x="10" y="15" width="2" height="1"/><rect x="14" y="15" width="2" height="1"/></g></g><path d="M46,771 L52.5,776.5 L46,782 Z" fill="#1A1A1A"/></svg>
<div class="a" style="left:67px;top:682px;width:1081px;height:109px;background:#fff;border:1px solid #80868C;overflow:hidden"><div class="a" style="left:11px;top:3px;width:59px;height:59px;background:#fff;border:1px solid #9A9A9A;box-shadow:3px 3px 3px rgba(0,0,0,.55)"><div class="ti"><svg width="55" height="34" viewBox="0 0 55 34" style="position:absolute;left:0;top:0"><rect width="55" height="34" fill="#8A8884"/><circle cx="62" cy="-8" r="62" fill="#C03020"/><circle cx="62" cy="-8" r="60" fill="none" stroke="#E03020" stroke-width="2.2"/><circle cx="62" cy="-8" r="58" fill="none" stroke="#F0A020" stroke-width="2.2"/><circle cx="62" cy="-8" r="56" fill="none" stroke="#F0E0C0" stroke-width="2.2"/><circle cx="62" cy="-8" r="54" fill="none" stroke="#2060B0" stroke-width="2.2"/><circle cx="62" cy="-8" r="52" fill="none" stroke="#E04030" stroke-width="2.2"/><circle cx="62" cy="-8" r="50" fill="none" stroke="#30A040" stroke-width="2.2"/><circle cx="62" cy="-8" r="48" fill="none" stroke="#F0D030" stroke-width="2.2"/><circle cx="62" cy="-8" r="46" fill="none" stroke="#C02030" stroke-width="2.2"/><circle cx="62" cy="-8" r="44" fill="none" stroke="#2080D0" stroke-width="2.2"/><circle cx="62" cy="-8" r="42" fill="none" stroke="#F8F0E0" stroke-width="2.2"/><circle cx="62" cy="-8" r="40" fill="none" stroke="#E05020" stroke-width="2.2"/><circle cx="62" cy="-8" r="38" fill="none" stroke="#208040" stroke-width="2.2"/><circle cx="62" cy="-8" r="36" fill="none" stroke="#F0C020" stroke-width="2.2"/><circle cx="62" cy="-8" r="34" fill="#6A5A0A"/><circle cx="62" cy="-8" r="36" fill="none" stroke="#208030" stroke-width="1.2"/><circle cx="62" cy="-8" r="24" fill="#F0C020"/><circle cx="62" cy="-8" r="22" fill="none" stroke="#E03020" stroke-width="1.6"/><circle cx="62" cy="-8" r="20.4" fill="none" stroke="#F0F0F0" stroke-width="1.6"/><circle cx="62" cy="-8" r="18.8" fill="none" stroke="#2060B0" stroke-width="1.6"/><circle cx="62" cy="-8" r="17.2" fill="none" stroke="#F0A020" stroke-width="1.6"/><circle cx="62" cy="-8" r="15.6" fill="none" stroke="#E04030" stroke-width="1.6"/><circle cx="62" cy="-8" r="14" fill="none" stroke="#30A0E0" stroke-width="1.6"/><circle cx="62" cy="-8" r="12.4" fill="none" stroke="#F0E0C0" stroke-width="1.6"/><circle cx="62" cy="-8" r="11" fill="#3A3028"/></svg></div></div><div class="a" style="left:4.5px;top:70px;width:75px;text-align:center;font-size:12px;line-height:14px;color:#000">img100.jpg</div><div class="a" style="left:95px;top:3px;width:59px;height:59px;background:#fff;border:1px solid #9A9A9A;box-shadow:3px 3px 3px rgba(0,0,0,.55)"><div class="ti" style="background:linear-gradient(170deg,#1A4AA0 0%,#3090E0 40%,#80C8F0 60%)"><div style="position:absolute;left:-10px;top:17px;width:50px;height:30px;border-radius:50%;background:#3A9A30"></div><div style="position:absolute;left:24px;top:22px;width:40px;height:20px;border-radius:50%;background:#2A7AC0"></div><div style="position:absolute;left:14px;top:15px;width:32px;height:6px;background:#E8EEF4;clip-path:polygon(0 100%,20% 20%,40% 60%,60% 0,80% 50%,100% 100%)"></div><div style="position:absolute;left:0;top:0;width:9px;height:8px;background:#F0C020;border-radius:0 0 8px 0"></div><div style="position:absolute;left:38px;top:4px;width:2px;height:20px;background:#E8E8E8"></div></div></div><div class="a" style="left:88.5px;top:70px;width:75px;text-align:center;font-size:12px;line-height:14px;color:#000">img101.png</div><div class="a" style="left:179px;top:3px;width:59px;height:59px;background:#fff;border:1px solid #9A9A9A;box-shadow:3px 3px 3px rgba(0,0,0,.55)"><div class="ti" style="background:radial-gradient(circle at 50% 40%,#F8D030 0,#F0A010 50%,#A05000 100%)"><div style="position:absolute;inset:0;background:radial-gradient(circle at 4px 4px,rgba(255,230,80,.7) 0 2px,rgba(120,50,0,.6) 3.5px,transparent 4px);background-size:7px 6px"></div></div></div><div class="a" style="left:172.5px;top:70px;width:75px;text-align:center;font-size:12px;line-height:14px;color:#000">img102.jpg</div><div class="a" style="left:263px;top:3px;width:59px;height:59px;background:#fff;border:1px solid #9A9A9A;box-shadow:3px 3px 3px rgba(0,0,0,.55)"><div class="ti" style="background:#1C0A58"><div style="position:absolute;left:-5px;top:3px;width:70px;height:9px;background:#F02060;transform:rotate(15deg)"></div><div style="position:absolute;left:14px;top:14px;width:40px;height:8px;background:#8030F0;transform:rotate(-12deg)"></div><div style="position:absolute;left:33px;top:0;width:8px;height:28px;background:#50D040"></div><div style="position:absolute;left:30px;top:10px;width:24px;height:7px;background:#30C0F0;transform:rotate(-20deg)"></div><div style="position:absolute;left:26px;top:10px;width:12px;height:8px;background:#F8E8F0;border-radius:50%"></div></div></div><div class="a" style="left:256.5px;top:70px;width:75px;text-align:center;font-size:12px;line-height:14px;color:#000">img103.png</div><div class="a" style="left:347px;top:3px;width:59px;height:59px;background:#fff;border:1px solid #9A9A9A;box-shadow:3px 3px 3px rgba(0,0,0,.55)"><div class="ti"><svg width="55" height="34" viewBox="0 0 55 34" style="position:absolute;left:0;top:0"><defs><linearGradient id="t104" x1="0" y1="0" x2="0" y2="1"><stop offset="0" stop-color="#7A98C8"/><stop offset="0.45" stop-color="#C8D0D8"/><stop offset="0.6" stop-color="#8A8A84"/><stop offset="1" stop-color="#3A3A30"/></linearGradient></defs><rect width="55" height="34" fill="url(#t104)"/><path d="M28,17 L88.0,17.0" stroke="#3A4050" stroke-width="0.7" opacity="0.7"/><path d="M28,17 L86.0,32.5" stroke="#3A4050" stroke-width="0.7" opacity="0.7"/><path d="M28,17 L80.0,47.0" stroke="#3A4050" stroke-width="0.7" opacity="0.7"/><path d="M28,17 L70.4,59.4" stroke="#3A4050" stroke-width="0.7" opacity="0.7"/><path d="M28,17 L58.0,69.0" stroke="#3A4050" stroke-width="0.7" opacity="0.7"/><path d="M28,17 L43.5,75.0" stroke="#3A4050" stroke-width="0.7" opacity="0.7"/><path d="M28,17 L28.0,77.0" stroke="#3A4050" stroke-width="0.7" opacity="0.7"/><path d="M28,17 L12.5,75.0" stroke="#3A4050" stroke-width="0.7" opacity="0.7"/><path d="M28,17 L-2.0,69.0" stroke="#3A4050" stroke-width="0.7" opacity="0.7"/><path d="M28,17 L-14.4,59.4" stroke="#3A4050" stroke-width="0.7" opacity="0.7"/><path d="M28,17 L-24.0,47.0" stroke="#3A4050" stroke-width="0.7" opacity="0.7"/><path d="M28,17 L-30.0,32.5" stroke="#3A4050" stroke-width="0.7" opacity="0.7"/><path d="M28,17 L-32.0,17.0" stroke="#3A4050" stroke-width="0.7" opacity="0.7"/><path d="M28,17 L-30.0,1.5" stroke="#3A4050" stroke-width="0.7" opacity="0.7"/><path d="M28,17 L-24.0,-13.0" stroke="#3A4050" stroke-width="0.7" opacity="0.7"/><path d="M28,17 L-14.4,-25.4" stroke="#3A4050" stroke-width="0.7" opacity="0.7"/><path d="M28,17 L-2.0,-35.0" stroke="#3A4050" stroke-width="0.7" opacity="0.7"/><path d="M28,17 L12.5,-41.0" stroke="#3A4050" stroke-width="0.7" opacity="0.7"/><path d="M28,17 L28.0,-43.0" stroke="#3A4050" stroke-width="0.7" opacity="0.7"/><path d="M28,17 L43.5,-41.0" stroke="#3A4050" stroke-width="0.7" opacity="0.7"/><path d="M28,17 L58.0,-35.0" stroke="#3A4050" stroke-width="0.7" opacity="0.7"/><path d="M28,17 L70.4,-25.4" stroke="#3A4050" stroke-width="0.7" opacity="0.7"/><path d="M28,17 L80.0,-13.0" stroke="#3A4050" stroke-width="0.7" opacity="0.7"/><path d="M28,17 L86.0,1.5" stroke="#3A4050" stroke-width="0.7" opacity="0.7"/><path d="M22,34 L27,18 L29,18 L34,34 Z" fill="#B8B8B0" opacity="0.8"/><path d="M0,22 L20,20 L0,28Z M55,22 L36,20 L55,28Z" fill="#D8D8C8" opacity="0.6"/></svg></div></div><div class="a" style="left:340.5px;top:70px;width:75px;text-align:center;font-size:12px;line-height:14px;color:#000">img104.jpg</div><div class="a" style="left:431px;top:3px;width:59px;height:59px;background:#fff;border:1px solid #9A9A9A;box-shadow:3px 3px 3px rgba(0,0,0,.55)"><div class="ti"><svg width="55" height="34" viewBox="0 0 55 34" style="position:absolute;left:0;top:0"><defs><linearGradient id="t105" x1="0" y1="0" x2="1" y2="1"><stop offset="0" stop-color="#C8D0DA"/><stop offset="0.5" stop-color="#F2F4F7"/><stop offset="1" stop-color="#DDE3EA"/></linearGradient><radialGradient id="t105n" cx="14" cy="30" r="20" gradientUnits="userSpaceOnUse"><stop offset="0" stop-color="#3A3C52"/><stop offset="1" stop-color="#020306" stop-opacity="0"/></radialGradient></defs><rect width="55" height="34" fill="#020306"/><rect width="55" height="34" fill="url(#t105n)"/><path d="M22,0 L55,0 L55,34 L34,34 C30,24 26,12 22,0 Z" fill="url(#t105)"/><path d="M36,0 L55,12 L55,17 L32,1 Z M44,0 L55,6 L55,9 L42,0Z" fill="#14161E"/><path d="M40,6 L55,20 L55,23 L37,8Z" fill="#2A2E38"/></svg></div></div><div class="a" style="left:424.5px;top:70px;width:75px;text-align:center;font-size:12px;line-height:14px;color:#000">img105.jpg</div><div class="a" style="left:881px;top:1px;width:93px;height:51px;background:#fff;border-radius:9px;box-shadow:-3px 4px 4px rgba(0,0,0,.25)"></div>
<div class="a" style="left:890px;top:10px;font-size:33px;line-height:33px;color:#8E8E8E;letter-spacing:4.3px">WIN</div>
<div class="a" style="left:977px;top:12px;font-size:33px;line-height:33px;color:#7E7E7E;letter-spacing:3.6px">Total</div></div><div class="a" style="left:998px;top:674px;width:50px;height:9px;border-radius:6px 6px 0 0;background:linear-gradient(#B8B8B8,#5A5A5A 40%,#E8EEF2 80%);opacity:.9"></div><!--/BPANEL-->
<!--TB1--><svg class="a" style="left:0;top:50px" width="1255" height="64" viewBox="0 50 1255 64"><rect x="11" y="55" width="2" height="2" fill="#2A4A5A"/><rect x="13" y="57" width="1" height="1" fill="#FFFFFF" opacity="0.8"/><rect x="11" y="58.5" width="2" height="2" fill="#2A4A5A"/><rect x="13" y="60.5" width="1" height="1" fill="#FFFFFF" opacity="0.8"/><rect x="11" y="62" width="2" height="2" fill="#2A4A5A"/><rect x="13" y="64" width="1" height="1" fill="#FFFFFF" opacity="0.8"/><rect x="11" y="65.5" width="2" height="2" fill="#2A4A5A"/><rect x="13" y="67.5" width="1" height="1" fill="#FFFFFF" opacity="0.8"/><rect x="11" y="69" width="2" height="2" fill="#2A4A5A"/><rect x="13" y="71" width="1" height="1" fill="#FFFFFF" opacity="0.8"/><rect x="11" y="72.5" width="2" height="2" fill="#2A4A5A"/><rect x="13" y="74.5" width="1" height="1" fill="#FFFFFF" opacity="0.8"/><rect x="11" y="76" width="2" height="2" fill="#2A4A5A"/><rect x="13" y="78" width="1" height="1" fill="#FFFFFF" opacity="0.8"/><rect x="11" y="79.5" width="2" height="2" fill="#2A4A5A"/><rect x="13" y="81.5" width="1" height="1" fill="#FFFFFF" opacity="0.8"/><rect x="11" y="86" width="2" height="2" fill="#2A4A5A"/><rect x="13" y="88" width="1" height="1" fill="#FFFFFF" opacity="0.8"/><rect x="11" y="89.5" width="2" height="2" fill="#2A4A5A"/><rect x="13" y="91.5" width="1" height="1" fill="#FFFFFF" opacity="0.8"/><rect x="11" y="93" width="2" height="2" fill="#2A4A5A"/><rect x="13" y="95" width="1" height="1" fill="#FFFFFF" opacity="0.8"/><rect x="11" y="96.5" width="2" height="2" fill="#2A4A5A"/><rect x="13" y="98.5" width="1" height="1" fill="#FFFFFF" opacity="0.8"/><rect x="11" y="100" width="2" height="2" fill="#2A4A5A"/><rect x="13" y="102" width="1" height="1" fill="#FFFFFF" opacity="0.8"/><rect x="11" y="103.5" width="2" height="2" fill="#2A4A5A"/><rect x="13" y="105.5" width="1" height="1" fill="#FFFFFF" opacity="0.8"/><rect x="11" y="107" width="2" height="2" fill="#2A4A5A"/><rect x="13" y="109" width="1" height="1" fill="#FFFFFF" opacity="0.8"/><rect x="11" y="110.5" width="2" height="2" fill="#2A4A5A"/><rect x="13" y="112.5" width="1" height="1" fill="#FFFFFF" opacity="0.8"/><path d="M24.5,58.5 L33,58.5 L36.5,62 L36.5,73.5 L24.5,73.5 Z" fill="#FBF3E8" stroke="#6A5E52" stroke-width="1"/><path d="M33,58.5 L33,62 L36.5,62" fill="#E8E0D8" stroke="#6A5E52" stroke-width="0.8"/><path d="M26,72 L35,62" stroke="#E8D8C8" stroke-width="2" opacity="0.6"/><path d="M52.5,60.5 L56,60.5 L57,62 L63,62 L63,72.5 L52.5,72.5 Z" fill="#FFF2B0" stroke="#7A2A10" stroke-width="0.9"/><path d="M53,72.5 L56.5,66 L68,66 L64,72.5 Z" fill="#EBC040" stroke="#7A2A10" stroke-width="0.9"/><path d="M60,61 C62,58 66,58 67,61.5" fill="none" stroke="#8A1A10" stroke-width="1"/><path d="M65.5,60.5 L68.5,63 L65,63.5Z" fill="#8A1A10"/><rect x="83.5" y="59.5" width="14" height="14" rx="1.5" fill="#40406A" stroke="#2A2A40" stroke-width="0.8"/><rect x="86" y="60" width="9" height="6" fill="#F8F0C8"/><rect x="86" y="59.8" width="9" height="1.2" fill="#E03030"/><rect x="87" y="68.5" width="7" height="5" fill="#E0E0E8"/><rect x="89.5" y="70" width="2" height="2" fill="#222"/><path d="M111.5,59.5 L114,59.5 L115,58.5 L119,58.5 L119.5,59.5 L119.5,63.5 L111.5,63.5 Z" fill="#F2D400" stroke="#3A3000" stroke-width="0.9"/><rect x="114" y="64" width="1.2" height="9" fill="#1A3A7A"/><rect x="114" y="69" width="5" height="1.2" fill="#1A3A7A"/><rect x="118.5" y="64.5" width="9" height="9" rx="1.5" fill="#40406A" stroke="#2A2A40" stroke-width="0.8"/><rect x="120" y="64.6667" width="6" height="4" fill="#F8F0C8"/><rect x="120" y="64.5333" width="6" height="0.8" fill="#E03030"/><rect x="120.667" y="70.3333" width="4.66667" height="3.33333" fill="#E0E0E8"/><rect x="122.333" y="71.3333" width="1.33333" height="1.33333" fill="#222"/><rect x="139" y="55" width="1" height="24" fill="#2E4A56"/><rect x="140" y="55" width="1" height="24" fill="#C8E0EA" opacity="0.45"/><path d="M153.5,58.5 L160,58.5 L162.5,61 L162.5,66 L153.5,66 Z" fill="#FAFAF5" stroke="#555" stroke-width="0.8"/><rect x="155" y="61" width="4" height="0.8" fill="#888"/><rect x="155" y="63" width="5" height="0.8" fill="#888"/><path d="M150.5,66.5 L165.5,66.5 L165.5,73.5 L150.5,73.5 Z" fill="#D8B8E0" stroke="#5A2A6A" stroke-width="0.9"/><rect x="151" y="69.5" width="14" height="1.2" fill="#7A3A8A"/><path d="M181,61 L190,58.5 L195,63 L185,66 Z" fill="#90A8F0" stroke="#4A3A8A" stroke-width="0.9"/><path d="M180.5,66.5 L195,62.5 L195,69.5 L185,73.5 L180.5,70.5 Z" fill="#C8A0E8" stroke="#4A3A8A" stroke-width="0.9"/><rect x="188" y="69" width="2" height="1.2" fill="#D02020"/><rect x="206" y="55" width="1" height="24" fill="#2E4A56"/><rect x="207" y="55" width="1" height="24" fill="#C8E0EA" opacity="0.45"/><path d="M223,63 C227,59 233,60 233,65 C233,69 230,71 227,73" fill="none" stroke="#E01818" stroke-width="2.4"/><path d="M220,63 L226,59.5 L225.5,67 Z" fill="#E01818"/><path d="M260,63 C256,59 250,60 250,65 C250,69 253,71 256,73" fill="none" stroke="#5A5A5A" stroke-width="2.4"/><path d="M263,63 L257,59.5 L257.5,67 Z" fill="#5A5A5A"/><rect x="274" y="55" width="1" height="24" fill="#2E4A56"/><rect x="275" y="55" width="1" height="24" fill="#C8E0EA" opacity="0.45"/><rect x="285" y="57" width="11" height="10" fill="#3A3A3A"/><rect x="286" y="58" width="9" height="8" fill="#78C0F0"/><path d="M286,64 L288.3,60 L290.5,62.5 L293.25,59.5 L295,63 L295,64.5 Z" fill="#3A9A20"/><rect x="286" y="64.2" width="9" height="1.8" fill="#F0C860"/><rect x="290" y="62" width="12" height="11" fill="#3A3A3A"/><rect x="291" y="63" width="10" height="9" fill="#78C0F0"/><path d="M291,69.7 L293.6,65.3 L296,68.05 L299,64.75 L301,68.6 L301,70.25 Z" fill="#3A9A20"/><rect x="291" y="69.92" width="10" height="2.08" fill="#F0C860"/><rect x="315.5" y="57.5" width="13" height="13" fill="#FFF" stroke="#111" stroke-width="1.5"/><g fill="#C8C8C8"><rect x="317" y="59" width="2" height="2"/><rect x="321" y="59" width="2" height="2"/><rect x="325" y="59" width="2" height="2"/><rect x="319" y="61" width="2" height="2"/><rect x="323" y="61" width="2" height="2"/><rect x="317" y="63" width="2" height="2"/><rect x="317" y="67" width="2" height="2"/></g><rect x="320" y="62" width="12" height="11" fill="#3A3A3A"/><rect x="321" y="63" width="10" height="9" fill="#78C0F0"/><path d="M321,69.7 L323.6,65.3 L326,68.05 L329,64.75 L331,68.6 L331,70.25 Z" fill="#3A9A20"/><rect x="321" y="69.92" width="10" height="2.08" fill="#F0C860"/><path d="M345.5,57.5 L353,57.5 L356.5,61 L356.5,70.5 L345.5,70.5 Z" fill="#FFFFFF" stroke="#777" stroke-width="1"/><path d="M353,57.5 L353,61 L356.5,61" fill="#E8E0D8" stroke="#777" stroke-width="0.8"/><rect x="350" y="62" width="12" height="11" fill="#3A3A3A"/><rect x="351" y="63" width="10" height="9" fill="#78C0F0"/><path d="M351,69.7 L353.6,65.3 L356,68.05 L359,64.75 L361,68.6 L361,70.25 Z" fill="#3A9A20"/><rect x="351" y="69.92" width="10" height="2.08" fill="#F0C860"/><rect x="372" y="55" width="1" height="24" fill="#2E4A56"/><rect x="373" y="55" width="1" height="24" fill="#C8E0EA" opacity="0.45"/><defs><linearGradient id="gsq" x1="0" y1="0" x2="1" y2="1"><stop offset="0" stop-color="#E0E0E0"/><stop offset="1" stop-color="#505050"/></linearGradient></defs><rect x="385" y="59" width="14" height="14" fill="url(#gsq)" stroke="#333" stroke-width="1"/><rect x="415" y="59" width="14" height="14" fill="#111"/><rect x="416" y="60" width="3.4" height="3.4" fill="#E00000"/><rect x="420.3" y="60" width="3.4" height="3.4" fill="#F0F000"/><rect x="424.6" y="60" width="3.4" height="3.4" fill="#00C000"/><rect x="416" y="64.3" width="3.4" height="3.4" fill="#00E0E0"/><rect x="420.3" y="64.3" width="3.4" height="3.4" fill="#0000F0"/><rect x="424.6" y="64.3" width="3.4" height="3.4" fill="#F000F0"/><rect x="416" y="68.6" width="3.4" height="3.4" fill="#700000"/><rect x="420.3" y="68.6" width="3.4" height="3.4" fill="#808000"/><rect x="424.6" y="68.6" width="3.4" height="3.4" fill="#008080"/><path d="M446.5,58.5 L455,58.5 L458.5,62 L458.5,72.5 L446.5,72.5 Z" fill="#F4F4F4" stroke="#555" stroke-width="1"/><path d="M455,58.5 L455,62 L458.5,62" fill="#E8E0D8" stroke="#555" stroke-width="0.8"/><g fill="#D0D0D0"><rect x="448" y="60" width="2" height="2"/><rect x="452" y="60" width="2" height="2"/><rect x="450" y="62" width="2" height="2"/><rect x="448" y="64" width="2" height="2"/><rect x="454" y="64" width="2" height="2"/><rect x="448" y="68" width="2" height="2"/></g><g transform="translate(449,61) scale(0.95)" fill="#111"><circle cx="5" cy="1.5" r="1.4"/><path d="M3.5,3.5 L6,3.5 L6.5,6.5 L8,8.5 L7,9 L5.5,7.2 L4.5,8.5 L2.5,10.5 L1.5,9.8 L3.5,7.5 L3.8,5.5 L2.5,6.5 L1.5,6 Z"/></g><rect x="470" y="55" width="1" height="24" fill="#2E4A56"/><rect x="471" y="55" width="1" height="24" fill="#C8E0EA" opacity="0.45"/><path d="M482.5,57.5 L489,57.5 L492.5,61 L492.5,68.5 L482.5,68.5 Z" fill="#FBF3E8" stroke="#333" stroke-width="1"/><path d="M489,57.5 L489,61 L492.5,61" fill="#E8E0D8" stroke="#333" stroke-width="0.8"/><g transform="translate(483,59) scale(0.7)" fill="#111"><circle cx="5" cy="1.5" r="1.4"/><path d="M3.5,3.5 L6,3.5 L6.5,6.5 L8,8.5 L7,9 L5.5,7.2 L4.5,8.5 L2.5,10.5 L1.5,9.8 L3.5,7.5 L3.8,5.5 L2.5,6.5 L1.5,6 Z"/></g><path d="M486.5,61.5 L494,61.5 L497.5,65 L497.5,73.5 L486.5,73.5 Z" fill="#FBF3E8" stroke="#333" stroke-width="1"/><path d="M494,61.5 L494,65 L497.5,65" fill="#E8E0D8" stroke="#333" stroke-width="0.8"/><g transform="translate(488,63) scale(0.9)" fill="#111"><circle cx="5" cy="1.5" r="1.4"/><path d="M3.5,3.5 L6,3.5 L6.5,6.5 L8,8.5 L7,9 L5.5,7.2 L4.5,8.5 L2.5,10.5 L1.5,9.8 L3.5,7.5 L3.8,5.5 L2.5,6.5 L1.5,6 Z"/></g><path d="M513.5,58.5 L523,58.5 L526.5,62 L526.5,72.5 L513.5,72.5 Z" fill="#FBF3E8" stroke="#333" stroke-width="1"/><path d="M523,58.5 L523,62 L526.5,62" fill="#E8E0D8" stroke="#333" stroke-width="0.8"/><g transform="translate(516,61) scale(0.9)" fill="#111"><circle cx="5" cy="1.5" r="1.4"/><path d="M3.5,3.5 L6,3.5 L6.5,6.5 L8,8.5 L7,9 L5.5,7.2 L4.5,8.5 L2.5,10.5 L1.5,9.8 L3.5,7.5 L3.8,5.5 L2.5,6.5 L1.5,6 Z"/></g><path d="M513,61 L527,61 M513,70.5 L527,70.5 M515.5,58 L515.5,73 M524,58 L524,73" stroke="#C84A1A" stroke-width="1.2"/><rect x="542.5" y="58.5" width="12" height="11" fill="none" stroke="#222" stroke-width="1.2" stroke-dasharray="1.5,1.2"/><path d="M551,66 L551,74 L553,72 L555,75.5 L556.5,74.8 L554.6,71.5 L557.5,71.5 Z" fill="#D0D0D0" stroke="#6A6A6A" stroke-width="0.8"/><text x="580.5" y="72" font-family="Liberation Serif" font-weight="bold" font-size="16" fill="#3A3A3A" text-anchor="middle">T</text><rect x="598" y="55" width="1" height="24" fill="#2E4A56"/><rect x="599" y="55" width="1" height="24" fill="#C8E0EA" opacity="0.45"/><path d="M610.5,59.5 L613,59.5 L614,58.5 L617,58.5 L617.5,59.5 L617.5,63.5 L610.5,63.5 Z" fill="#F2D400" stroke="#3A3000" stroke-width="0.9"/><rect x="613" y="64" width="1.2" height="9" fill="#1A3A7A"/><rect x="613" y="66.5" width="5" height="1.2" fill="#1A3A7A"/><rect x="613" y="71.5" width="5" height="1.2" fill="#1A3A7A"/><path d="M617.5,64.5 L620,64.5 L621,63.5 L625,63.5 L625.5,64.5 L625.5,68 L617.5,68 Z" fill="#F2D400" stroke="#3A3000" stroke-width="0.9"/><path d="M617.5,69.5 L620,69.5 L621,68.5 L625,68.5 L625.5,69.5 L625.5,73 L617.5,73 Z" fill="#F2D400" stroke="#3A3000" stroke-width="0.9"/><g transform="translate(647.8,67)"><circle r="6" fill="#D8A850" stroke="#8A6A30" stroke-width="0.8"/><rect x="-1.6" y="-8" width="3.2" height="3.5" fill="#D8A850" transform="rotate(0)"/><rect x="-1.6" y="-8" width="3.2" height="3.5" fill="#D8A850" transform="rotate(45)"/><rect x="-1.6" y="-8" width="3.2" height="3.5" fill="#D8A850" transform="rotate(90)"/><rect x="-1.6" y="-8" width="3.2" height="3.5" fill="#D8A850" transform="rotate(135)"/><rect x="-1.6" y="-8" width="3.2" height="3.5" fill="#D8A850" transform="rotate(180)"/><rect x="-1.6" y="-8" width="3.2" height="3.5" fill="#D8A850" transform="rotate(225)"/><rect x="-1.6" y="-8" width="3.2" height="3.5" fill="#D8A850" transform="rotate(270)"/><rect x="-1.6" y="-8" width="3.2" height="3.5" fill="#D8A850" transform="rotate(315)"/><circle r="2" fill="#B88838"/><rect x="-0.8" y="-9" width="1.6" height="7" fill="#6A5A40"/></g><rect x="670.5" y="59.5" width="15" height="13" fill="#F0F2F6" stroke="#5A78B0"/><rect x="671" y="60" width="14" height="2.5" fill="#6A88C0"/><g fill="#6A7A9A"><rect x="672" y="64" width="5" height="1"/><rect x="673" y="66.5" width="1.5" height="1"/><rect x="677" y="66.5" width="6" height="1"/><rect x="673" y="69" width="1.5" height="1"/><rect x="677" y="69" width="5" height="1"/></g><rect x="697" y="55" width="2" height="2" fill="#2A4A5A"/><rect x="699" y="57" width="1" height="1" fill="#FFFFFF" opacity="0.8"/><rect x="697" y="58.5" width="2" height="2" fill="#2A4A5A"/><rect x="699" y="60.5" width="1" height="1" fill="#FFFFFF" opacity="0.8"/><rect x="697" y="62" width="2" height="2" fill="#2A4A5A"/><rect x="699" y="64" width="1" height="1" fill="#FFFFFF" opacity="0.8"/><rect x="697" y="65.5" width="2" height="2" fill="#2A4A5A"/><rect x="699" y="67.5" width="1" height="1" fill="#FFFFFF" opacity="0.8"/><rect x="697" y="69" width="2" height="2" fill="#2A4A5A"/><rect x="699" y="71" width="1" height="1" fill="#FFFFFF" opacity="0.8"/><rect x="697" y="72.5" width="2" height="2" fill="#2A4A5A"/><rect x="699" y="74.5" width="1" height="1" fill="#FFFFFF" opacity="0.8"/><rect x="697" y="76" width="2" height="2" fill="#2A4A5A"/><rect x="699" y="78" width="1" height="1" fill="#FFFFFF" opacity="0.8"/><rect x="697" y="79.5" width="2" height="2" fill="#2A4A5A"/><rect x="699" y="81.5" width="1" height="1" fill="#FFFFFF" opacity="0.8"/><rect x="706.5" y="55.5" width="72" height="22" fill="#FFFFFF" stroke="#B8C0C8"/><rect x="707" y="56" width="71" height="21" fill="#F4F8FA"/><rect x="762.5" y="57.5" width="14" height="18" fill="#EDEDED" stroke="#ACACAC"/><path d="M766.5,65 L772.5,65 L769.5,68 Z" fill="#111"/><text x="709.5" y="71" font-family="Liberation Sans" font-size="12" fill="#000">36%</text><circle cx="796" cy="63.5" r="5" fill="#FFFFFF" stroke="#222" stroke-width="1.8" stroke-dasharray="2.2,0.8"/><path d="M793,63.5 L799,63.5" stroke="#111" stroke-width="1.6"/><path d="M796,60.5 L796,66.5" stroke="#111" stroke-width="1.6"/><path d="M799.5,67.5 L805,73" stroke="#222" stroke-width="3" stroke-linecap="round"/><path d="M799.5,67.5 L801,69" stroke="#F0D020" stroke-width="1.5"/><circle cx="826" cy="63.5" r="5" fill="#FFFFFF" stroke="#222" stroke-width="1.8" stroke-dasharray="2.2,0.8"/><path d="M823,63.5 L829,63.5" stroke="#111" stroke-width="1.6"/><path d="M829.5,67.5 L835,73" stroke="#222" stroke-width="3" stroke-linecap="round"/><path d="M829.5,67.5 L831,69" stroke="#F0D020" stroke-width="1.5"/><rect x="852" y="60" width="12" height="12" fill="#3A3A3A"/><rect x="853" y="61" width="10" height="10" fill="#78C0F0"/><path d="M853,68.4 L855.6,63.6 L858,66.6 L861,63 L863,67.2 L863,69 Z" fill="#3A9A20"/><rect x="853" y="68.64" width="10" height="2.36" fill="#F0C860"/><path d="M850,58 L854,62 M866,58 L862,62 M850,74 L854,70 M866,74 L862,70" stroke="#333" stroke-width="1.2"/><rect x="882" y="61" width="12" height="11" fill="#3A3A3A"/><rect x="883" y="62" width="10" height="9" fill="#78C0F0"/><path d="M883,68.7 L885.6,64.3 L888,67.05 L891,63.75 L893,67.6 L893,69.25 Z" fill="#3A9A20"/><rect x="883" y="68.92" width="10" height="2.08" fill="#F0C860"/><path d="M880,58.5 L883,58.5 L880,61.5Z M896,58.5 L893,58.5 L896,61.5Z M880,74 L883,74 L880,71Z M896,74 L893,74 L896,71Z" fill="#333"/><rect x="910" y="58" width="16" height="2" fill="#555"/><rect x="911.5" y="60.5" width="13" height="9" fill="#A8D0F8" stroke="#222" stroke-width="1"/><path d="M918,70 L918,72 M914,74 L918,71.5 L922,74" stroke="#222" stroke-width="1" fill="none"/><g transform="translate(27.5,94)"><rect x="-0.5" y="-5.5" width="1" height="11" fill="#111" transform="rotate(0)"/><rect x="-0.5" y="-5.5" width="1" height="11" fill="#111" transform="rotate(45)"/><rect x="-0.5" y="-5.5" width="1" height="11" fill="#111" transform="rotate(90)"/><rect x="-0.5" y="-5.5" width="1" height="11" fill="#111" transform="rotate(135)"/><rect x="-0.5" y="-5.5" width="1" height="11" fill="#111" transform="rotate(180)"/><rect x="-0.5" y="-5.5" width="1" height="11" fill="#111" transform="rotate(225)"/><rect x="-0.5" y="-5.5" width="1" height="11" fill="#111" transform="rotate(270)"/><rect x="-0.5" y="-5.5" width="1" height="11" fill="#111" transform="rotate(315)"/><circle r="3.2" fill="#FFF" stroke="#111" stroke-width="0.8"/></g><rect x="32.5" y="101.5" width="6" height="2" fill="#111"/><g transform="translate(57.5,94)"><rect x="-0.5" y="-5.5" width="1" height="11" fill="#111" transform="rotate(0)"/><rect x="-0.5" y="-5.5" width="1" height="11" fill="#111" transform="rotate(45)"/><rect x="-0.5" y="-5.5" width="1" height="11" fill="#111" transform="rotate(90)"/><rect x="-0.5" y="-5.5" width="1" height="11" fill="#111" transform="rotate(135)"/><rect x="-0.5" y="-5.5" width="1" height="11" fill="#111" transform="rotate(180)"/><rect x="-0.5" y="-5.5" width="1" height="11" fill="#111" transform="rotate(225)"/><rect x="-0.5" y="-5.5" width="1" height="11" fill="#111" transform="rotate(270)"/><rect x="-0.5" y="-5.5" width="1" height="11" fill="#111" transform="rotate(315)"/><circle r="3.2" fill="#FFF" stroke="#111" stroke-width="0.8"/></g><rect x="62.5" y="101" width="6" height="2" fill="#111"/><rect x="64.5" y="99" width="2" height="6" fill="#111"/><rect x="78.5" y="86" width="1" height="24" fill="#2E4A56"/><rect x="79.5" y="86" width="1" height="24" fill="#C8E0EA" opacity="0.45"/><circle cx="95" cy="94" r="4.2" fill="#FFF" stroke="#111" stroke-width="0.9"/><path d="M95,89.8 A4.2,4.2 0 0 0 95,98.2 Z" fill="#111"/><rect x="99.5" y="101.5" width="6" height="2" fill="#111"/><circle cx="125" cy="94" r="4.2" fill="#FFF" stroke="#111" stroke-width="0.9"/><path d="M125,89.8 A4.2,4.2 0 0 0 125,98.2 Z" fill="#111"/><rect x="129.5" y="101" width="6" height="2" fill="#111"/><rect x="131.5" y="99" width="2" height="6" fill="#111"/><rect x="146.5" y="86" width="1" height="24" fill="#2E4A56"/><rect x="147.5" y="86" width="1" height="24" fill="#C8E0EA" opacity="0.45"/><path d="M159.5,90.9 L167.5,90.9 L167.5,93.5 M161.8,91 L161.8,100" fill="none" stroke="#111" stroke-width="1.9"/><rect x="159.5" y="99.6" width="4.6" height="1.4" fill="#111"/><rect x="159.2" y="90.2" width="1.2" height="1.2" fill="#111"/><rect x="168" y="101.5" width="6" height="2" fill="#111"/><path d="M189.5,90.9 L197.5,90.9 L197.5,93.5 M191.8,91 L191.8,100" fill="none" stroke="#111" stroke-width="1.9"/><rect x="189.5" y="99.6" width="4.6" height="1.4" fill="#111"/><rect x="189.2" y="90.2" width="1.2" height="1.2" fill="#111"/><rect x="198" y="101" width="6" height="2" fill="#111"/><rect x="200" y="99" width="2" height="6" fill="#111"/><rect x="214.5" y="86" width="1" height="24" fill="#2E4A56"/><rect x="215.5" y="86" width="1" height="24" fill="#C8E0EA" opacity="0.45"/><rect x="227" y="90" width="9" height="9" fill="#111"/><rect x="227.3" y="90.3" width="4" height="4" fill="#F01010"/><rect x="231.7" y="90.3" width="4" height="4" fill="#10D010"/><rect x="227.3" y="94.7" width="4" height="4" fill="#F0F010"/><rect x="231.7" y="94.7" width="4" height="4" fill="#1010F0"/><rect x="236" y="101.5" width="6" height="2" fill="#111"/><rect x="257" y="90" width="9" height="9" fill="#111"/><rect x="257.3" y="90.3" width="4" height="4" fill="#F01010"/><rect x="261.7" y="90.3" width="4" height="4" fill="#10D010"/><rect x="257.3" y="94.7" width="4" height="4" fill="#F0F010"/><rect x="261.7" y="94.7" width="4" height="4" fill="#1010F0"/><rect x="266" y="101" width="6" height="2" fill="#111"/><rect x="268" y="99" width="2" height="6" fill="#111"/><rect x="282.5" y="86" width="1" height="24" fill="#2E4A56"/><rect x="283.5" y="86" width="1" height="24" fill="#C8E0EA" opacity="0.45"/><path d="M295,100 L298,93 L300.5,96 L303,89 L306,95 L310,100 Z" fill="#1A50C0" stroke="#0A2A70" stroke-width="0.8"/><rect x="295" y="102.5" width="15" height="1.4" fill="#3A4A5A"/><rect x="301" y="101" width="2" height="4.5" fill="#2A3A6A"/><rect x="324" y="91" width="16" height="1.2" fill="#2A3A48"/><rect x="335" y="89.6" width="1.6" height="4" fill="#2A3A48"/><rect x="324" y="96.5" width="16" height="1.2" fill="#2A3A48"/><rect x="330" y="95.1" width="1.6" height="4" fill="#2A3A48"/><rect x="324" y="101.3" width="16" height="1.2" fill="#2A3A48"/><rect x="333" y="99.9" width="1.6" height="4" fill="#2A3A48"/><rect x="350" y="86" width="1" height="24" fill="#2E4A56"/><rect x="351" y="86" width="1" height="24" fill="#C8E0EA" opacity="0.45"/><path d="M362,90.5 L368.5,90.5 L368.5,92.5 M364,90.5 L364,98.5" stroke="#111" stroke-width="1.8" fill="none"/><rect x="362" y="98" width="4" height="1.3" fill="#111"/><path d="M371.5,92.5 L376.5,92.5 M374,90 L374,95 M371.5,97.5 L376.5,97.5" stroke="#333" stroke-width="0.9"/><text x="361.5" y="105.5" font-family="Liberation Mono" font-weight="bold" font-size="5.5" fill="#C01010" letter-spacing="0.4">AUTO</text><circle cx="396" cy="94" r="4.2" fill="#FFF" stroke="#111" stroke-width="0.9"/><path d="M396,89.8 A4.2,4.2 0 0 0 396,98.2 Z" fill="#111"/><path d="M402,92.5 L407,92.5 M404.5,90 L404.5,95 M402,97.5 L407,97.5" stroke="#333" stroke-width="0.9"/><text x="391.5" y="105.5" font-family="Liberation Mono" font-weight="bold" font-size="5.5" fill="#C01010" letter-spacing="0.4">AUTO</text><rect x="418.5" y="86" width="1" height="24" fill="#2E4A56"/><rect x="419.5" y="86" width="1" height="24" fill="#C8E0EA" opacity="0.45"/><rect x="431" y="90" width="14" height="14" fill="#1A1A1A"/><rect x="432" y="91" width="3.3" height="3.3" fill="#4A4A4A"/><rect x="436.3" y="91" width="3.3" height="3.3" fill="#D8D8D8"/><rect x="440.6" y="91" width="3.3" height="3.3" fill="#4A4A4A"/><rect x="432" y="95.3" width="3.3" height="3.3" fill="#D8D8D8"/><rect x="436.3" y="95.3" width="3.3" height="3.3" fill="#7A7A7A"/><rect x="440.6" y="95.3" width="3.3" height="3.3" fill="#D8D8D8"/><rect x="432" y="99.6" width="3.3" height="3.3" fill="#4A4A4A"/><rect x="436.3" y="99.6" width="3.3" height="3.3" fill="#D8D8D8"/><rect x="440.6" y="99.6" width="3.3" height="3.3" fill="#4A4A4A"/><rect x="461" y="90" width="14" height="14" fill="#1A1208"/><rect x="462" y="91" width="3.3" height="3.3" fill="#4A3A20"/><rect x="466.3" y="91" width="3.3" height="3.3" fill="#C89A5A"/><rect x="470.6" y="91" width="3.3" height="3.3" fill="#4A3A20"/><rect x="462" y="95.3" width="3.3" height="3.3" fill="#C89A5A"/><rect x="466.3" y="95.3" width="3.3" height="3.3" fill="#6A5030"/><rect x="470.6" y="95.3" width="3.3" height="3.3" fill="#C89A5A"/><rect x="462" y="99.6" width="3.3" height="3.3" fill="#4A3A20"/><rect x="466.3" y="99.6" width="3.3" height="3.3" fill="#C89A5A"/><rect x="470.6" y="99.6" width="3.3" height="3.3" fill="#4A3A20"/><rect x="491" y="90" width="14" height="14" fill="#5A5A30"/><rect x="492" y="91" width="3.3" height="3.3" fill="#8A8A50"/><rect x="496.3" y="91" width="3.3" height="3.3" fill="#D8D890"/><rect x="500.6" y="91" width="3.3" height="3.3" fill="#8A8A50"/><rect x="492" y="95.3" width="3.3" height="3.3" fill="#D8D890"/><rect x="496.3" y="95.3" width="3.3" height="3.3" fill="#A0A060"/><rect x="500.6" y="95.3" width="3.3" height="3.3" fill="#D8D890"/><rect x="492" y="99.6" width="3.3" height="3.3" fill="#8A8A50"/><rect x="496.3" y="99.6" width="3.3" height="3.3" fill="#D8D890"/><rect x="500.6" y="99.6" width="3.3" height="3.3" fill="#8A8A50"/><rect x="516.5" y="86" width="1" height="24" fill="#2E4A56"/><rect x="517.5" y="86" width="1" height="24" fill="#C8E0EA" opacity="0.45"/><rect x="530" y="92" width="13" height="11" fill="#FFF" stroke="#222" stroke-width="1"/><g fill="#333"><rect x="530.5" y="92.5" width="1.2" height="1.2"/><rect x="530.5" y="94.9" width="1.2" height="1.2"/><rect x="530.5" y="97.3" width="1.2" height="1.2"/><rect x="530.5" y="99.7" width="1.2" height="1.2"/><rect x="530.5" y="102.1" width="1.2" height="1.2"/><rect x="531.7" y="93.7" width="1.2" height="1.2"/><rect x="531.7" y="96.1" width="1.2" height="1.2"/><rect x="531.7" y="98.5" width="1.2" height="1.2"/><rect x="531.7" y="100.9" width="1.2" height="1.2"/><rect x="532.9" y="92.5" width="1.2" height="1.2"/><rect x="532.9" y="94.9" width="1.2" height="1.2"/><rect x="532.9" y="97.3" width="1.2" height="1.2"/><rect x="532.9" y="99.7" width="1.2" height="1.2"/><rect x="532.9" y="102.1" width="1.2" height="1.2"/><rect x="534.1" y="93.7" width="1.2" height="1.2"/><rect x="534.1" y="96.1" width="1.2" height="1.2"/><rect x="534.1" y="98.5" width="1.2" height="1.2"/><rect x="534.1" y="100.9" width="1.2" height="1.2"/><rect x="535.3" y="92.5" width="1.2" height="1.2"/><rect x="535.3" y="94.9" width="1.2" height="1.2"/><rect x="535.3" y="97.3" width="1.2" height="1.2"/><rect x="535.3" y="99.7" width="1.2" height="1.2"/><rect x="535.3" y="102.1" width="1.2" height="1.2"/></g><rect x="536" y="89.5" width="1.3" height="15" fill="#D05010"/><path d="M566.5,91 C565.5,95 561.7,100 561.7,102 C561.7,104 571.3,104 571.3,102 C571.3,100 567.5,95 566.5,91 Z" fill="#FAFAFA" stroke="#333" stroke-width="0.9"/><path d="M593,90 C592,94 588.8,98 588.8,100 C588.8,102 597.2,102 597.2,100 C597.2,98 594,94 593,90 Z" fill="#FAFAFA" stroke="#333" stroke-width="0.9"/><path d="M597,92 C596,96 592.5,100 592.5,102 C592.5,104 601.5,104 601.5,102 C601.5,100 598,96 597,92 Z" fill="#FAFAFA" stroke="#333" stroke-width="0.9"/><rect x="614.5" y="86" width="1" height="24" fill="#2E4A56"/><rect x="615.5" y="86" width="1" height="24" fill="#C8E0EA" opacity="0.45"/><path d="M625,97 L630.5,91.5 L634,95 L636,93 L640,97 Z" fill="#F4F4F4" stroke="#333" stroke-width="0.9"/><path d="M627,103 L634,95.5 L642,103 Z" fill="#F4F4F4" stroke="#333" stroke-width="0.9"/><path d="M629,101.5 L634,97 L639.5,101.5" fill="none" stroke="#888" stroke-width="0.8"/><path d="M664.7,91 C663.7,95 660.4,99.5 660.4,101.5 C660.4,103.5 669,103.5 669,101.5 C669,99.5 665.7,95 664.7,91 Z" fill="#FAFAFA" stroke="#333" stroke-width="0.9"/><path d="M692,90 C691,94 688.2,97 688.2,99 C688.2,101 695.8,101 695.8,99 C695.8,97 693,94 692,90 Z" fill="#FAFAFA" stroke="#333" stroke-width="0.9"/><path d="M696,92 C695,96 691.8,100 691.8,102 C691.8,104 700.2,104 700.2,102 C700.2,100 697,96 696,92 Z" fill="#FAFAFA" stroke="#333" stroke-width="0.9"/><rect x="713" y="86" width="1" height="24" fill="#2E4A56"/><rect x="714" y="86" width="1" height="24" fill="#C8E0EA" opacity="0.45"/><defs><linearGradient id="rbw" x1="0" y1="0" x2="1" y2="0"><stop offset="0" stop-color="#F00"/><stop offset="0.25" stop-color="#FF0"/><stop offset="0.5" stop-color="#0C0"/><stop offset="0.75" stop-color="#0CF"/><stop offset="1" stop-color="#00F"/></linearGradient><linearGradient id="bgr" x1="0" y1="0" x2="1" y2="0"><stop offset="0" stop-color="#0000C0"/><stop offset="1" stop-color="#F0F0FF"/></linearGradient></defs><rect x="725.5" y="89.5" width="14" height="9" fill="url(#rbw)" stroke="#111" stroke-width="1.2"/><path d="M727,103 L738,103" stroke="#111" stroke-width="1.3"/><path d="M725,103 L728,100.8 L728,105.2Z M740,103 L737,100.8 L737,105.2Z" fill="#111"/><rect x="755.5" y="89.5" width="14" height="9" fill="url(#bgr)" stroke="#111" stroke-width="1.2"/><path d="M756,103 L768,103" stroke="#111" stroke-width="1.3"/><path d="M770,103 L767,100.8 L767,105.2Z" fill="#111"/><path d="M785,90 C789,89 793,91 797,89.5 C800,91 798,96 800,100 C799,103 796,104 792,103.5 C789,104.5 786,103 785,101 C786,97 784,94 785,90Z" fill="#B8C4D0" stroke="#8A98A8" stroke-width="0.8"/><g transform="translate(788,91) scale(1)" fill="#2A3038"><circle cx="5" cy="1.5" r="1.4"/><path d="M3.5,3.5 L6,3.5 L6.5,6.5 L8,8.5 L7,9 L5.5,7.2 L4.5,8.5 L2.5,10.5 L1.5,9.8 L3.5,7.5 L3.8,5.5 L2.5,6.5 L1.5,6 Z"/></g><rect x="810.5" y="86" width="1" height="24" fill="#2E4A56"/><rect x="811.5" y="86" width="1" height="24" fill="#C8E0EA" opacity="0.45"/><path d="M823.5,89.5 L826,89.5 L829.5,93 L829.5,104.5 L823.5,104.5 Z" fill="#FBF3E8" stroke="#5A5048" stroke-width="1"/><path d="M826,89.5 L826,93 L829.5,93" fill="#E8E0D8" stroke="#5A5048" stroke-width="0.8"/><path d="M831.5,89.5 L834,89.5 L837.5,93 L837.5,104.5 L831.5,104.5 Z" fill="#FBF3E8" stroke="#5A5048" stroke-width="1"/><path d="M834,89.5 L834,93 L837.5,93" fill="#E8E0D8" stroke="#5A5048" stroke-width="0.8"/><path d="M854.5,89.5 L863,89.5 L866.5,93 L866.5,95.5 L854.5,95.5 Z" fill="#FBF3E8" stroke="#5A5048" stroke-width="1"/><path d="M863,89.5 L863,93 L866.5,93" fill="#E8E0D8" stroke="#5A5048" stroke-width="0.8"/><path d="M854.5,98.5 L863,98.5 L866.5,102 L866.5,104.5 L854.5,104.5 Z" fill="#FBF3E8" stroke="#5A5048" stroke-width="1"/><path d="M863,98.5 L863,102 L866.5,102" fill="#E8E0D8" stroke="#5A5048" stroke-width="0.8"/><path d="M886.5,88.5 L893,88.5 L896.5,92 L896.5,98.5 L886.5,98.5 Z" fill="#FBF3E8" stroke="#333" stroke-width="1"/><path d="M893,88.5 L893,92 L896.5,92" fill="#E8E0D8" stroke="#333" stroke-width="0.8"/><g transform="translate(889,89) scale(0.8)" fill="#111"><circle cx="5" cy="1.5" r="1.4"/><path d="M3.5,3.5 L6,3.5 L6.5,6.5 L8,8.5 L7,9 L5.5,7.2 L4.5,8.5 L2.5,10.5 L1.5,9.8 L3.5,7.5 L3.8,5.5 L2.5,6.5 L1.5,6 Z"/></g><rect x="881.5" y="95.5" width="11" height="9.5" fill="#FBF3E8" stroke="#333"/><g transform="translate(883,96) rotate(-20 5 5)"><g transform="translate(0,0) scale(0.85)" fill="#111"><circle cx="5" cy="1.5" r="1.4"/><path d="M3.5,3.5 L6,3.5 L6.5,6.5 L8,8.5 L7,9 L5.5,7.2 L4.5,8.5 L2.5,10.5 L1.5,9.8 L3.5,7.5 L3.8,5.5 L2.5,6.5 L1.5,6 Z"/></g></g><path d="M911.5,88.5 L918,88.5 L921.5,92 L921.5,98.5 L911.5,98.5 Z" fill="#FBF3E8" stroke="#333" stroke-width="1"/><path d="M918,88.5 L918,92 L921.5,92" fill="#E8E0D8" stroke="#333" stroke-width="0.8"/><g transform="translate(913,89) scale(0.8)" fill="#111"><circle cx="5" cy="1.5" r="1.4"/><path d="M3.5,3.5 L6,3.5 L6.5,6.5 L8,8.5 L7,9 L5.5,7.2 L4.5,8.5 L2.5,10.5 L1.5,9.8 L3.5,7.5 L3.8,5.5 L2.5,6.5 L1.5,6 Z"/></g><rect x="916.5" y="95.5" width="12" height="9.5" fill="#FBF3E8" stroke="#333"/><g transform="translate(918,96) rotate(-60 5 5)"><g transform="translate(0,0) scale(0.85)" fill="#111"><circle cx="5" cy="1.5" r="1.4"/><path d="M3.5,3.5 L6,3.5 L6.5,6.5 L8,8.5 L7,9 L5.5,7.2 L4.5,8.5 L2.5,10.5 L1.5,9.8 L3.5,7.5 L3.8,5.5 L2.5,6.5 L1.5,6 Z"/></g></g></svg><!--/TB1-->
<!--TB2--><!--/TB2-->
<!--WINCTL--><svg class="a" style="left:0;top:0" width="1255" height="30" viewBox="0 0 1255 30">
<defs>
<linearGradient id="appg" x1="0" y1="0" x2="1" y2="1"><stop offset="0" stop-color="#FF2000"/><stop offset="0.35" stop-color="#F0E000"/><stop offset="0.6" stop-color="#60D020"/><stop offset="1" stop-color="#0030C0"/></linearGradient>
</defs>
<rect x="10" y="7" width="15" height="16" fill="#000"/>
<rect x="11" y="9.5" width="13" height="11" fill="url(#appg)"/>
<g fill="#fff"><rect x="12" y="8" width="1" height="1"/><rect x="14" y="8" width="1" height="1"/><rect x="16" y="8" width="1" height="1"/><rect x="18" y="8" width="1" height="1"/><rect x="20" y="8" width="1" height="1"/><rect x="22" y="8" width="1" height="1"/>
<rect x="12" y="21" width="1" height="1"/><rect x="14" y="21" width="1" height="1"/><rect x="16" y="21" width="1" height="1"/><rect x="18" y="21" width="1" height="1"/><rect x="20" y="21" width="1" height="1"/><rect x="22" y="21" width="1" height="1"/></g>
<rect x="1159" y="13" width="9" height="2" fill="#111"/>
<rect x="1185.5" y="7.5" width="10" height="7" fill="none" stroke="#111" stroke-width="1"/>
<rect x="1185" y="7" width="11" height="2" fill="#111"/>
<rect x="1203" y="1" width="45" height="20" fill="#C7504B"/>
<path d="M1222,8 L1230,15 M1230,8 L1222,15" stroke="#fff" stroke-width="1.6"/>
</svg>
<svg class="a" style="left:210px;top:151px" width="841" height="30" viewBox="210 151 841 30">
<defs>
<linearGradient id="mbg" x1="0" y1="0" x2="0" y2="1"><stop offset="0" stop-color="#D6E2F0"/><stop offset="0.5" stop-color="#C0D2E8"/><stop offset="0.5" stop-color="#A8C0DC"/><stop offset="1" stop-color="#BCD0E8"/></linearGradient>
<linearGradient id="cbg" x1="0" y1="0" x2="0" y2="1"><stop offset="0" stop-color="#E8A898"/><stop offset="0.5" stop-color="#D87060"/><stop offset="0.5" stop-color="#C03A20"/><stop offset="1" stop-color="#D86850"/></linearGradient>
</defs>
<rect x="220" y="161" width="13" height="15" fill="#5A5A5A"/>
<path d="M220.5,161.5 L230,161.5 L232.5,164 L232.5,175.5 L220.5,175.5 Z" fill="#FFFBF0" stroke="#4A4A4A" stroke-width="1"/>
<rect x="222" y="164.5" width="9" height="2.5" fill="#222"/><rect x="222" y="171" width="9" height="2.5" fill="#222"/><g fill="#fff"><rect x="223" y="165.3" width="1" height="1"/><rect x="225" y="165.3" width="1" height="1"/><rect x="227" y="165.3" width="1" height="1"/><rect x="229" y="165.3" width="1" height="1"/><rect x="223" y="171.8" width="1" height="1"/><rect x="225" y="171.8" width="1" height="1"/><rect x="227" y="171.8" width="1" height="1"/><rect x="229" y="171.8" width="1" height="1"/></g>
<rect x="222" y="167" width="9" height="4" fill="url(#appg2)"/>
<linearGradient id="appg2" x1="0" y1="0" x2="1" y2="0"><stop offset="0" stop-color="#FF2000"/><stop offset="0.5" stop-color="#30D030"/><stop offset="1" stop-color="#2040E0"/></linearGradient>
<rect x="942.5" y="160.5" width="31" height="17" rx="3" fill="url(#mbg)" stroke="#6E8AAC"/>
<rect x="976.5" y="160.5" width="31" height="17" rx="3" fill="url(#mbg)" stroke="#6E8AAC"/>
<rect x="1010.5" y="160.5" width="31" height="17" rx="3" fill="url(#cbg)" stroke="#6A2020"/>
<rect x="952.5" y="168.5" width="10" height="4" rx="1.5" fill="#F4F4F4" stroke="#4A5A70"/>
<rect x="986.5" y="164.5" width="10" height="8" rx="1" fill="#F4F4F4" stroke="#4A5A70"/>
<rect x="988.5" y="166.5" width="6" height="3" fill="#7A90B0"/>
<path d="M1021,165 L1029.5,172.5 M1029.5,165 L1021,172.5" stroke="#3A3A4A" stroke-width="4" stroke-linecap="round"/>
<path d="M1021,165 L1029.5,172.5 M1029.5,165 L1021,172.5" stroke="#FFFFFF" stroke-width="2.2" stroke-linecap="round"/>
</svg><!--/WINCTL-->
</body></html>
